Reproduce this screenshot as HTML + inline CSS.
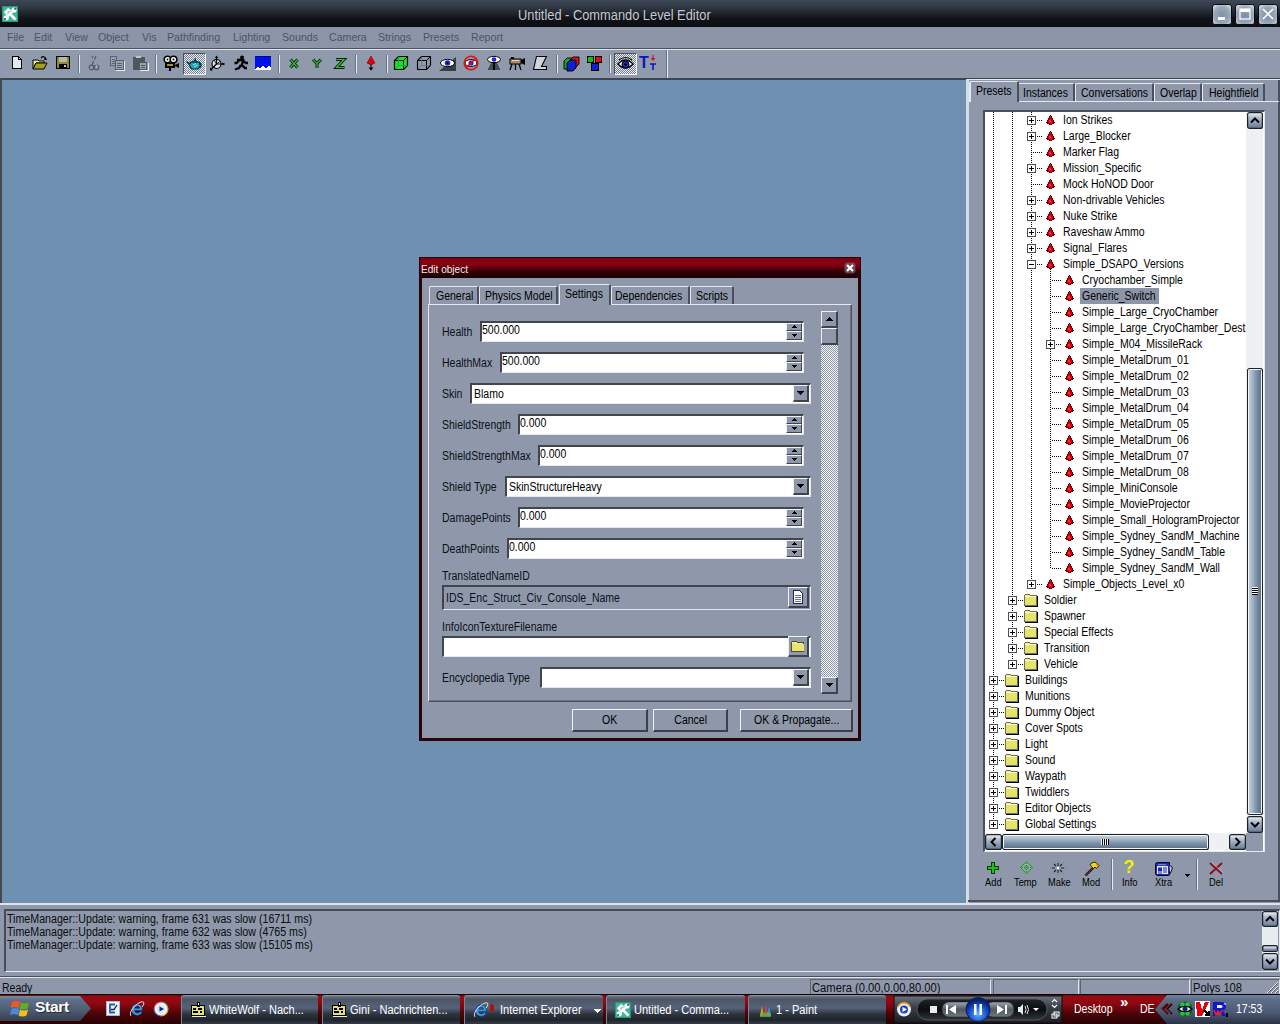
<!DOCTYPE html><html><head><meta charset="utf-8"><style>
*{box-sizing:border-box}
html,body{margin:0;padding:0;width:1280px;height:1024px;overflow:hidden;background:#8e98aa;font-family:"Liberation Sans",sans-serif;font-size:11px;color:#000}
.a{position:absolute}
.t{position:absolute;white-space:nowrap;line-height:13px;font-size:12px;transform-origin:0 0}
svg.a{overflow:visible}
</style></head><body><div class="a" style="left:0px;top:0px;width:1280px;height:27px;background:linear-gradient(#3e4856 0px,#343c48 6px,#20262e 13px,#0f1217 19px,#0c0e12 27px)"></div>
<svg class="a" style="left:2px;top:6px" width="16" height="16" viewBox="0 0 16 16">
<rect x="0" y="0" width="16" height="16" fill="#3cb898"/>
<rect x="0.5" y="0.5" width="15" height="15" fill="none" stroke="#2a9878" stroke-width="1"/>
<path d="M4.5 11.5 L11.5 4.5" stroke="#fff" stroke-width="2.4"/>
<circle cx="12" cy="4" r="2.6" fill="#fff"/><circle cx="13.2" cy="2.8" r="1.1" fill="#1a7058"/>
<circle cx="4.2" cy="11.8" r="2.6" fill="#fff"/><circle cx="3" cy="13" r="1.1" fill="#1a7058"/>
<path d="M7 7 L13.5 13.5" stroke="#fff" stroke-width="2.6"/>
<path d="M1.8 6.2 L6.2 1.8 L9.2 4.8 L4.8 9.2z" fill="#fff"/>
<path d="M5.5 7 L7.5 5" stroke="#1a7058" stroke-width="0.8"/>
</svg>
<div class="t" style="left:518px;top:7px;transform:scaleX(0.917);font-size:14px;line-height:16px;color:#c4c8ce">Untitled - Commando Level Editor</div>
<svg class="a" style="left:1212px;top:4px" width="20" height="21" viewBox="0 0 20 21">
<defs><radialGradient id="wgmin" cx="50%" cy="55%" r="70%">
<stop offset="0" stop-color="#7d8ea6"/><stop offset="0.6" stop-color="#9aa8ba"/><stop offset="1" stop-color="#e4e9ef"/></radialGradient></defs>
<rect x="0.5" y="0.5" width="19" height="20" rx="2.5" fill="url(#wgmin)" stroke="#0a0c10"/>
<rect x="6" y="13" width="7" height="3" fill="#fff"/></svg>
<svg class="a" style="left:1235px;top:4px" width="20" height="21" viewBox="0 0 20 21">
<defs><radialGradient id="wgmax" cx="50%" cy="55%" r="70%">
<stop offset="0" stop-color="#7d8ea6"/><stop offset="0.6" stop-color="#9aa8ba"/><stop offset="1" stop-color="#e4e9ef"/></radialGradient></defs>
<rect x="0.5" y="0.5" width="19" height="20" rx="2.5" fill="url(#wgmax)" stroke="#0a0c10"/>
<rect x="5" y="5" width="10" height="10" fill="none" stroke="#fff" stroke-width="1.2"/><rect x="5" y="5" width="10" height="3" fill="#fff"/></svg>
<svg class="a" style="left:1258px;top:4px" width="20" height="21" viewBox="0 0 20 21">
<defs><radialGradient id="wgclose" cx="50%" cy="55%" r="70%">
<stop offset="0" stop-color="#7d8ea6"/><stop offset="0.6" stop-color="#9aa8ba"/><stop offset="1" stop-color="#e4e9ef"/></radialGradient></defs>
<rect x="0.5" y="0.5" width="19" height="20" rx="2.5" fill="url(#wgclose)" stroke="#0a0c10"/>
<path d="M5 5 L15 15 M15 5 L5 15" stroke="#fff" stroke-width="1.6"/></svg>
<div class="a" style="left:0px;top:27px;width:1280px;height:21px;background:#8b95a7"></div>
<div class="t" style="left:7px;top:31px;transform:scaleX(0.965);color:#4d5464;font-size:11px">File</div>
<div class="t" style="left:34px;top:31px;transform:scaleX(0.965);color:#4d5464;font-size:11px">Edit</div>
<div class="t" style="left:65px;top:31px;transform:scaleX(0.965);color:#4d5464;font-size:11px">View</div>
<div class="t" style="left:98px;top:31px;transform:scaleX(0.965);color:#4d5464;font-size:11px">Object</div>
<div class="t" style="left:142px;top:31px;transform:scaleX(0.965);color:#4d5464;font-size:11px">Vis</div>
<div class="t" style="left:167px;top:31px;transform:scaleX(0.965);color:#4d5464;font-size:11px">Pathfinding</div>
<div class="t" style="left:233px;top:31px;transform:scaleX(0.965);color:#4d5464;font-size:11px">Lighting</div>
<div class="t" style="left:282px;top:31px;transform:scaleX(0.965);color:#4d5464;font-size:11px">Sounds</div>
<div class="t" style="left:329px;top:31px;transform:scaleX(0.965);color:#4d5464;font-size:11px">Camera</div>
<div class="t" style="left:378px;top:31px;transform:scaleX(0.965);color:#4d5464;font-size:11px">Strings</div>
<div class="t" style="left:423px;top:31px;transform:scaleX(0.965);color:#4d5464;font-size:11px">Presets</div>
<div class="t" style="left:471px;top:31px;transform:scaleX(0.965);color:#4d5464;font-size:11px">Report</div>
<div class="a" style="left:0px;top:48px;width:1280px;height:1px;background:#4a505e"></div>
<div class="a" style="left:0px;top:49px;width:1280px;height:1px;background:#e2e6ee"></div>
<div class="a" style="left:0px;top:50px;width:1280px;height:28px;background:#8f9aac"></div>
<svg class="a" style="left:9px;top:55px" width="16" height="16" viewBox="0 0 16 16" shape-rendering="crispEdges"><path d="M3.5 1.5h6l3 3v9h-9z" fill="#e4e6f0" stroke="#000"/><path d="M9.5 1.5v3h3" fill="none" stroke="#000"/></svg>
<svg class="a" style="left:32px;top:55px" width="16" height="16" viewBox="0 0 16 16"><path d="M1 5h5l1 1h5v2H4L1 14z" fill="#f0ec90" stroke="#000"/><path d="M1 14l3-6h11l-3 6z" fill="#a0a020" stroke="#000"/><path d="M9 3 q3-3 5 1" fill="none" stroke="#000" stroke-width="1.2"/><path d="M13 2l2 3l-3 0z" fill="#000"/></svg>
<svg class="a" style="left:55px;top:55px" width="16" height="16" viewBox="0 0 16 16" shape-rendering="crispEdges"><rect x="1.5" y="1.5" width="13" height="12" fill="#8c8c28" stroke="#000"/><rect x="4" y="2" width="8" height="5" fill="#b8b8b0"/><rect x="4" y="9" width="8" height="4" fill="#000"/><rect x="9" y="10" width="2" height="2" fill="#c8c8a0"/></svg>
<div class="a" style="left:78px;top:55px;width:1px;height:18px;background:#6a7282"></div>
<div class="a" style="left:79px;top:55px;width:1px;height:18px;background:#e8ecf2"></div>
<svg class="a" style="left:86px;top:55px" width="16" height="16" viewBox="0 0 16 16"><path d="M6 1 L10 10 M10 1 L6 10" stroke="#555c68" stroke-width="1.2"/><circle cx="5.5" cy="12.5" r="2.3" fill="none" stroke="#555c68" stroke-width="1.2"/><circle cx="10.5" cy="12.5" r="2.3" fill="none" stroke="#555c68" stroke-width="1.2"/><path d="M6 2 L10 11" stroke="#e8ecf2" stroke-width="0.6" transform="translate(1 1)"/></svg>
<svg class="a" style="left:109px;top:55px" width="16" height="16" viewBox="0 0 16 16" shape-rendering="crispEdges"><path d="M1.5 1.5h6v9h-6z" fill="#9aa2b0" stroke="#5a606c"/><path d="M6.5 5.5h8v9h-8z" fill="#9aa2b0" stroke="#5a606c"/><path d="M8 8h5M8 10h5M8 12h5M3 4h3M3 6h3M3 8h3" stroke="#5a606c"/><path d="M7 15h8V6" fill="none" stroke="#e6eaf0"/></svg>
<svg class="a" style="left:132px;top:55px" width="16" height="16" viewBox="0 0 16 16" shape-rendering="crispEdges"><rect x="1" y="2" width="11" height="12" fill="#50565e" stroke="#50565e"/><rect x="4" y="1" width="5" height="2" fill="#c0c6d0"/><rect x="7.5" y="7.5" width="7" height="7" fill="#9aa2b0" stroke="#50565e"/><path d="M9 10h4M9 12h4" stroke="#50565e"/><path d="M8 15h8V8" fill="none" stroke="#e6eaf0"/></svg>
<div class="a" style="left:155px;top:55px;width:1px;height:18px;background:#6a7282"></div>
<div class="a" style="left:156px;top:55px;width:1px;height:18px;background:#e8ecf2"></div>
<svg class="a" style="left:163px;top:55px" width="16" height="16" viewBox="0 0 16 16"><circle cx="4.5" cy="4.5" r="3.3" fill="#fff" stroke="#000" stroke-width="1.6"/><circle cx="10.5" cy="4.5" r="3.3" fill="#fff" stroke="#000" stroke-width="1.6"/><circle cx="4.5" cy="4.5" r="1" fill="#000"/><circle cx="10.5" cy="4.5" r="1" fill="#000"/><rect x="2" y="8" width="10" height="5" fill="#000"/><path d="M12 10l4-2v5l-4-2z" fill="#000"/><rect x="6" y="13" width="2" height="3" fill="#000"/><rect x="4" y="9" width="6" height="2" fill="#a09030"/></svg>
<div class="a" style="left:183px;top:53px;width:23px;height:22px;border-top:1px solid #4a505c;border-left:1px solid #4a505c;border-bottom:1px solid #eef1f5;border-right:1px solid #eef1f5;background-color:#b0b6c0;background-image:repeating-conic-gradient(#e8ebf0 0 25%,#7a8292 0 50%);background-size:2px 2px"></div>
<svg class="a" style="left:186px;top:55px" width="17" height="16" viewBox="0 0 17 16"><path d="M5 7 H13 Q15 9 13.5 12.5 L12 14 H6 L4.5 12.5 Q3 9 5 7z" fill="#20a8b8" stroke="#002830" stroke-width="1.1"/><path d="M6.5 7 Q9 3.5 11.5 7z" fill="#20a8b8" stroke="#002830" stroke-width="1"/><rect x="8.5" y="3.5" width="1.5" height="1.5" fill="#002830"/><path d="M5 9 L0.8 6.8 L2.5 9 L4.5 12" fill="#20a8b8" stroke="#002830" stroke-width="1"/><path d="M13.5 8.5 Q16.5 9 14 12.5" fill="none" stroke="#002830" stroke-width="1.3"/><path d="M7 10 L10 8.5 M8 12 L11.5 10" stroke="#90f0f0" stroke-width="0.9"/></svg>
<svg class="a" style="left:209px;top:55px" width="16" height="16" viewBox="0 0 16 16"><circle cx="7.5" cy="9" r="4.5" fill="#dde2ea" stroke="#000" stroke-width="1.1"/><path d="M7.5 1v8 M7.5 9l8 0 M7.5 9l-6 6" stroke="#000" stroke-width="1.2" fill="none"/><path d="M6 3l1.5-2.5l1.5 2.5z M13.5 7.5l2.5 1.5l-2.5 1.5z M1 12.5v3h3z" fill="#000"/><path d="M7.5 9l-2.5-4 M7.5 9 l4-3" stroke="#000" stroke-width="0.8"/></svg>
<svg class="a" style="left:232px;top:55px" width="16" height="16" viewBox="0 0 16 16"><circle cx="10" cy="2.5" r="2" fill="#000"/><path d="M5 5h6l-1 5 l3 3h2 M10.5 5l3.5 3h2 M7.5 5l-3 3h-2 M9 10l-2 3l-4 1.5" stroke="#000" stroke-width="2.3" fill="none"/></svg>
<svg class="a" style="left:255px;top:56px" width="16" height="14" viewBox="0 0 16 14" shape-rendering="crispEdges"><rect x="0" y="0" width="16" height="14" fill="#0010e8"/><path d="M0 14 L2 11 L5 12 L8 10 L11 12 L14 10 L16 11 L16 14z" fill="#fff"/><rect x="0" y="0" width="16" height="1" fill="#0000a0"/></svg>
<div class="a" style="left:278px;top:55px;width:1px;height:18px;background:#6a7282"></div>
<div class="a" style="left:279px;top:55px;width:1px;height:18px;background:#e8ecf2"></div>
<svg class="a" style="left:289px;top:58px" width="11" height="11" viewBox="0 0 11 11"><path d="M1.5 1.5 L8.5 9.5 M8.5 1.5 L1.5 9.5" stroke="#0a1a0a" stroke-width="3" fill="none" stroke-linejoin="miter"/><path d="M1.5 1.5 L8.5 9.5 M8.5 1.5 L1.5 9.5" stroke="#30c030" stroke-width="1.2" fill="none"/></svg>
<svg class="a" style="left:312px;top:58px" width="11" height="11" viewBox="0 0 11 11"><path d="M1 1.5 L5 5.5 L9 1.5 M5 5.5 V10" stroke="#0a1a0a" stroke-width="3" fill="none" stroke-linejoin="miter"/><path d="M1 1.5 L5 5.5 L9 1.5 M5 5.5 V10" stroke="#30c030" stroke-width="1.2" fill="none"/></svg>
<svg class="a" style="left:335px;top:58px" width="11" height="11" viewBox="0 0 11 11"><path d="M1 1.5 H9 L1.5 9.5 H9.5" stroke="#0a1a0a" stroke-width="3" fill="none" stroke-linejoin="miter"/><path d="M1 1.5 H9 L1.5 9.5 H9.5" stroke="#30c030" stroke-width="1.2" fill="none"/></svg>
<div class="a" style="left:355px;top:55px;width:1px;height:18px;background:#6a7282"></div>
<div class="a" style="left:356px;top:55px;width:1px;height:18px;background:#e8ecf2"></div>
<svg class="a" style="left:363px;top:55px" width="16" height="16" viewBox="0 0 16 16"><path d="M8 1 L12 8 Q8 11 4 8z" fill="#e00010" stroke="#900" stroke-width="0.6"/><path d="M8 9v6" stroke="#000" stroke-width="1"/><path d="M5.5 12.5h5l-2.5 3z" fill="#000"/></svg>
<div class="a" style="left:386px;top:55px;width:1px;height:18px;background:#6a7282"></div>
<div class="a" style="left:387px;top:55px;width:1px;height:18px;background:#e8ecf2"></div>
<svg class="a" style="left:393px;top:55px" width="16" height="16" viewBox="0 0 16 16"><path d="M1.5 5.5 L5.5 1.5 H14.5 V10.5 L10.5 14.5 H1.5z" fill="#20e020" stroke="#000" stroke-width="1.2"/><path d="M1.5 5.5H10.5V14.5 M10.5 5.5L14.5 1.5" stroke="#000" stroke-width="1" fill="none"/><path d="M5.5 1.5V10.5H14.5 M5.5 10.5L1.5 14.5" stroke="#0a6" stroke-width="0.8" fill="none"/></svg>
<svg class="a" style="left:416px;top:55px" width="16" height="16" viewBox="0 0 16 16"><path d="M1.5 5.5 L5.5 1.5 H14.5 V10.5 L10.5 14.5 H1.5z" fill="none" stroke="#000" stroke-width="1.1"/><path d="M1.5 5.5H10.5V14.5 M10.5 5.5L14.5 1.5" stroke="#000" stroke-width="1" fill="none"/><path d="M5.5 1.5V10.5H14.5 M5.5 10.5L1.5 14.5" stroke="#667" stroke-width="0.6" fill="none"/></svg>
<svg class="a" style="left:439px;top:55px" width="17" height="16" viewBox="0 0 17 16"><path d="M0 16 L17 2 V16z" fill="#3a3e44"/><ellipse cx="8.5" cy="8" rx="7" ry="3.6" fill="#fff" stroke="#000" stroke-width="1"/><circle cx="8.5" cy="8" r="2.8" fill="#1e2ad0"/><circle cx="8.5" cy="8" r="1.1" fill="#000"/></svg>
<svg class="a" style="left:463px;top:55px" width="16" height="16" viewBox="0 0 16 16"><ellipse cx="8" cy="8" rx="6" ry="3.4" fill="#fff" stroke="#000"/><circle cx="8" cy="8" r="2.6" fill="#1e2ad0"/><circle cx="8" cy="8" r="6.8" fill="none" stroke="#e01010" stroke-width="1.6"/><path d="M3 13L13 3" stroke="#e01010" stroke-width="1.6"/></svg>
<svg class="a" style="left:486px;top:55px" width="16" height="16" viewBox="0 0 16 16"><ellipse cx="8" cy="4.5" rx="6.5" ry="3.2" fill="#fff" stroke="#000"/><circle cx="8" cy="4.5" r="2.3" fill="#1e2ad0"/><path d="M5 8h6M4 10h8M3 12h10M2 14h12" stroke="#000" stroke-width="1.2"/><path d="M8 7v8" stroke="#000" stroke-width="2"/></svg>
<svg class="a" style="left:509px;top:55px" width="16" height="16" viewBox="0 0 16 16"><rect x="1" y="4" width="11" height="5" fill="#b08860" stroke="#000"/><path d="M12 5l4-2v7l-4-2z" fill="#000"/><path d="M3 9 L1 15 M10 9 L12 15 M6.5 9v6" stroke="#000" stroke-width="1.3"/><rect x="2" y="2" width="3" height="2" fill="#000"/><rect x="3" y="5" width="7" height="1" fill="#e0d8c0"/></svg>
<svg class="a" style="left:532px;top:55px" width="16" height="16" viewBox="0 0 16 16"><path d="M4.5 1.5 H14.5 L9.5 11.5 H14.5 V14.5 H1.5z" fill="#d0d4dc" stroke="#000" stroke-width="1.1"/></svg>
<div class="a" style="left:556px;top:55px;width:1px;height:18px;background:#6a7282"></div>
<div class="a" style="left:557px;top:55px;width:1px;height:18px;background:#e8ecf2"></div>
<svg class="a" style="left:563px;top:55px" width="17" height="16" viewBox="0 0 17 16"><path d="M1 6 L4 3 H10 V11 L7 14 H1z" fill="#10b010" stroke="#000" stroke-width="0.9"/><path d="M7 5 L10 2 H16 V9 L13 12 H7z" fill="#e01010" stroke="#000" stroke-width="0.9"/><path d="M4 8 L7 5 H13 V13 L10 16 H4z" fill="#1020d0" stroke="#000" stroke-width="0.9"/></svg>
<svg class="a" style="left:586px;top:55px" width="16" height="16" viewBox="0 0 16 16" shape-rendering="crispEdges"><rect x="1.5" y="1.5" width="6" height="6" fill="#10c010" stroke="#000"/><rect x="9.5" y="1.5" width="6" height="6" fill="#e01010" stroke="#000"/><rect x="5.5" y="8.5" width="7" height="7" fill="#1020d0" stroke="#000"/></svg>
<div class="a" style="left:609px;top:55px;width:1px;height:18px;background:#6a7282"></div>
<div class="a" style="left:610px;top:55px;width:1px;height:18px;background:#e8ecf2"></div>
<div class="a" style="left:614px;top:53px;width:23px;height:22px;border-top:1px solid #4a505c;border-left:1px solid #4a505c;border-bottom:1px solid #eef1f5;border-right:1px solid #eef1f5;background-color:#b0b6c0;background-image:repeating-conic-gradient(#e8ebf0 0 25%,#7a8292 0 50%);background-size:2px 2px"></div>
<svg class="a" style="left:617px;top:56px" width="17" height="16" viewBox="0 0 17 16"><path d="M1 8 Q8.5 0 16 8 Q8.5 16 1 8z" fill="#fff" stroke="#000" stroke-width="1.5"/><circle cx="8.5" cy="8.5" r="3.5" fill="#1e2ad0" stroke="#000"/><circle cx="8.5" cy="8.5" r="1.3" fill="#000"/><path d="M2 4 Q8.5 -1 15 4" fill="none" stroke="#000" stroke-width="1.2"/></svg>
<div class="a" style="left:639px;top:54px;font-weight:bold;font-size:16px;line-height:18px;color:#0c14b8">T</div>
<svg class="a" style="left:649px;top:55px" width="8" height="16" viewBox="0 0 8 16"><path d="M4 0v4" stroke="#e01010" stroke-width="1.2"/><path d="M1.5 3h5l-2.5 3z" fill="#e01010"/><path d="M1 9h6M4 9v6" stroke="#0c14b8" stroke-width="1.6"/></svg>
<div class="a" style="left:666px;top:50px;width:1px;height:28px;background:#6a7282"></div>
<div class="a" style="left:667px;top:50px;width:1px;height:28px;background:#e8ecf2"></div>
<div class="a" style="left:0px;top:78px;width:1280px;height:2px;background:#3e4550"></div>
<div class="a" style="left:0px;top:80px;width:966px;height:823px;background:#6f91b1"></div>
<div class="a" style="left:0px;top:78px;width:2px;height:826px;background:#434a55"></div>
<div class="a" style="left:966px;top:80px;width:314px;height:823px;background:#8e98aa"></div>
<div class="a" style="left:966px;top:79px;width:314px;height:1px;background:#e4e8ef"></div>
<div class="a" style="left:966px;top:79px;width:3px;height:824px;background:#d4dcea"></div>
<div class="a" style="left:1278px;top:80px;width:2px;height:822px;background:#4a505c"></div>
<div class="a" style="left:968px;top:900px;width:312px;height:2px;background:#4a505c"></div>
<div class="a" style="left:969px;top:101px;width:310px;height:1px;background:#e4e8ef"></div>
<div class="a" style="left:1018px;top:83px;width:57px;height:18px;border-top:1px solid #e4e8ef;border-left:1px solid #e4e8ef;border-right:2px solid #4a505c;border-top-left-radius:2px;border-top-right-radius:2px;background:#8e98aa"></div>
<div class="t" style="left:1023px;top:87px;transform:scaleX(0.875);">Instances</div>
<div class="a" style="left:1075px;top:83px;width:79px;height:18px;border-top:1px solid #e4e8ef;border-left:1px solid #e4e8ef;border-right:2px solid #4a505c;border-top-left-radius:2px;border-top-right-radius:2px;background:#8e98aa"></div>
<div class="t" style="left:1081px;top:87px;transform:scaleX(0.875);">Conversations</div>
<div class="a" style="left:1154px;top:83px;width:48px;height:18px;border-top:1px solid #e4e8ef;border-left:1px solid #e4e8ef;border-right:2px solid #4a505c;border-top-left-radius:2px;border-top-right-radius:2px;background:#8e98aa"></div>
<div class="t" style="left:1160px;top:87px;transform:scaleX(0.875);">Overlap</div>
<div class="a" style="left:1202px;top:83px;width:63px;height:18px;border-top:1px solid #e4e8ef;border-left:1px solid #e4e8ef;border-right:2px solid #4a505c;border-top-left-radius:2px;border-top-right-radius:2px;background:#8e98aa"></div>
<div class="t" style="left:1209px;top:87px;transform:scaleX(0.875);">Heightfield</div>
<div class="a" style="left:969px;top:81px;width:50px;height:21px;border-top:1px solid #e4e8ef;border-left:2px solid #e4e8ef;border-right:2px solid #4a505c;border-top-left-radius:2px;border-top-right-radius:2px;background:#8e98aa"></div>
<div class="t" style="left:976px;top:85px;transform:scaleX(0.875);">Presets</div>
<div class="a" style="left:983px;top:110px;width:282px;height:742px;border-top:2px solid #4a505c;border-left:2px solid #4a505c;border-bottom:1px solid #e4e8ef;border-right:1px solid #e4e8ef;background:#fff"></div>
<div class="a" style="left:985px;top:112px;width:261px;height:721px;overflow:hidden">
<div class="a" style="left:8px;top:0px;width:1px;height:712px;background-image:linear-gradient(#000 50%,transparent 50%);background-size:1px 2px"></div>
<div class="a" style="left:27px;top:0px;width:1px;height:552px;background-image:linear-gradient(#000 50%,transparent 50%);background-size:1px 2px"></div>
<div class="a" style="left:46px;top:0px;width:1px;height:472px;background-image:linear-gradient(#000 50%,transparent 50%);background-size:1px 2px"></div>
<div class="a" style="left:65px;top:157px;width:1px;height:299px;background-image:linear-gradient(#000 50%,transparent 50%);background-size:1px 2px"></div>
<div class="a" style="left:48px;top:8px;width:10px;height:1px;background-image:linear-gradient(90deg,#000 50%,transparent 50%);background-size:2px 1px"></div>
<div class="a" style="left:42px;top:4px;width:9px;height:9px;border:1px solid #4a4e56;background:#fff"></div>
<div class="a" style="left:44px;top:8px;width:5px;height:1px;background:#000"></div>
<div class="a" style="left:46px;top:6px;width:1px;height:5px;background:#000"></div>
<svg class="a" style="left:61px;top:3px" width="9" height="10" viewBox="0 0 9 10" shape-rendering="crispEdges"><rect x="4" y="0" width="1" height="1" fill="#5a0000"/><rect x="3" y="1" width="3" height="1" fill="#5a0000"/><rect x="3" y="2" width="3" height="1" fill="#5a0000"/><rect x="2" y="3" width="5" height="1" fill="#5a0000"/><rect x="2" y="4" width="5" height="1" fill="#5a0000"/><rect x="1" y="5" width="7" height="1" fill="#5a0000"/><rect x="1" y="6" width="7" height="1" fill="#5a0000"/><rect x="0" y="7" width="9" height="1" fill="#5a0000"/><rect x="1" y="8" width="7" height="1" fill="#5a0000"/><rect x="3" y="9" width="3" height="1" fill="#5a0000"/><rect x="4" y="1" width="1" height="1" fill="#d80010"/><rect x="4" y="2" width="1" height="1" fill="#d80010"/><rect x="3" y="3" width="3" height="1" fill="#d80010"/><rect x="3" y="4" width="3" height="1" fill="#d80010"/><rect x="2" y="5" width="5" height="1" fill="#d80010"/><rect x="2" y="6" width="5" height="1" fill="#d80010"/><rect x="2" y="7" width="5" height="1" fill="#d80010"/><rect x="3" y="8" width="3" height="1" fill="#d80010"/><rect x="4" y="9" width="1" height="1" fill="#d80010"/><rect x="3" y="5" width="2" height="2" fill="#ff2030"/><rect x="3" y="7" width="3" height="1" fill="#f01020"/></svg>
<div class="t" style="left:78px;top:2px;transform:scaleX(0.875);color:#000">Ion Strikes</div>
<div class="a" style="left:48px;top:24px;width:10px;height:1px;background-image:linear-gradient(90deg,#000 50%,transparent 50%);background-size:2px 1px"></div>
<div class="a" style="left:42px;top:20px;width:9px;height:9px;border:1px solid #4a4e56;background:#fff"></div>
<div class="a" style="left:44px;top:24px;width:5px;height:1px;background:#000"></div>
<div class="a" style="left:46px;top:22px;width:1px;height:5px;background:#000"></div>
<svg class="a" style="left:61px;top:19px" width="9" height="10" viewBox="0 0 9 10" shape-rendering="crispEdges"><rect x="4" y="0" width="1" height="1" fill="#5a0000"/><rect x="3" y="1" width="3" height="1" fill="#5a0000"/><rect x="3" y="2" width="3" height="1" fill="#5a0000"/><rect x="2" y="3" width="5" height="1" fill="#5a0000"/><rect x="2" y="4" width="5" height="1" fill="#5a0000"/><rect x="1" y="5" width="7" height="1" fill="#5a0000"/><rect x="1" y="6" width="7" height="1" fill="#5a0000"/><rect x="0" y="7" width="9" height="1" fill="#5a0000"/><rect x="1" y="8" width="7" height="1" fill="#5a0000"/><rect x="3" y="9" width="3" height="1" fill="#5a0000"/><rect x="4" y="1" width="1" height="1" fill="#d80010"/><rect x="4" y="2" width="1" height="1" fill="#d80010"/><rect x="3" y="3" width="3" height="1" fill="#d80010"/><rect x="3" y="4" width="3" height="1" fill="#d80010"/><rect x="2" y="5" width="5" height="1" fill="#d80010"/><rect x="2" y="6" width="5" height="1" fill="#d80010"/><rect x="2" y="7" width="5" height="1" fill="#d80010"/><rect x="3" y="8" width="3" height="1" fill="#d80010"/><rect x="4" y="9" width="1" height="1" fill="#d80010"/><rect x="3" y="5" width="2" height="2" fill="#ff2030"/><rect x="3" y="7" width="3" height="1" fill="#f01020"/></svg>
<div class="t" style="left:78px;top:18px;transform:scaleX(0.875);color:#000">Large_Blocker</div>
<div class="a" style="left:48px;top:40px;width:10px;height:1px;background-image:linear-gradient(90deg,#000 50%,transparent 50%);background-size:2px 1px"></div>
<svg class="a" style="left:61px;top:35px" width="9" height="10" viewBox="0 0 9 10" shape-rendering="crispEdges"><rect x="4" y="0" width="1" height="1" fill="#5a0000"/><rect x="3" y="1" width="3" height="1" fill="#5a0000"/><rect x="3" y="2" width="3" height="1" fill="#5a0000"/><rect x="2" y="3" width="5" height="1" fill="#5a0000"/><rect x="2" y="4" width="5" height="1" fill="#5a0000"/><rect x="1" y="5" width="7" height="1" fill="#5a0000"/><rect x="1" y="6" width="7" height="1" fill="#5a0000"/><rect x="0" y="7" width="9" height="1" fill="#5a0000"/><rect x="1" y="8" width="7" height="1" fill="#5a0000"/><rect x="3" y="9" width="3" height="1" fill="#5a0000"/><rect x="4" y="1" width="1" height="1" fill="#d80010"/><rect x="4" y="2" width="1" height="1" fill="#d80010"/><rect x="3" y="3" width="3" height="1" fill="#d80010"/><rect x="3" y="4" width="3" height="1" fill="#d80010"/><rect x="2" y="5" width="5" height="1" fill="#d80010"/><rect x="2" y="6" width="5" height="1" fill="#d80010"/><rect x="2" y="7" width="5" height="1" fill="#d80010"/><rect x="3" y="8" width="3" height="1" fill="#d80010"/><rect x="4" y="9" width="1" height="1" fill="#d80010"/><rect x="3" y="5" width="2" height="2" fill="#ff2030"/><rect x="3" y="7" width="3" height="1" fill="#f01020"/></svg>
<div class="t" style="left:78px;top:34px;transform:scaleX(0.875);color:#000">Marker Flag</div>
<div class="a" style="left:48px;top:56px;width:10px;height:1px;background-image:linear-gradient(90deg,#000 50%,transparent 50%);background-size:2px 1px"></div>
<div class="a" style="left:42px;top:52px;width:9px;height:9px;border:1px solid #4a4e56;background:#fff"></div>
<div class="a" style="left:44px;top:56px;width:5px;height:1px;background:#000"></div>
<div class="a" style="left:46px;top:54px;width:1px;height:5px;background:#000"></div>
<svg class="a" style="left:61px;top:51px" width="9" height="10" viewBox="0 0 9 10" shape-rendering="crispEdges"><rect x="4" y="0" width="1" height="1" fill="#5a0000"/><rect x="3" y="1" width="3" height="1" fill="#5a0000"/><rect x="3" y="2" width="3" height="1" fill="#5a0000"/><rect x="2" y="3" width="5" height="1" fill="#5a0000"/><rect x="2" y="4" width="5" height="1" fill="#5a0000"/><rect x="1" y="5" width="7" height="1" fill="#5a0000"/><rect x="1" y="6" width="7" height="1" fill="#5a0000"/><rect x="0" y="7" width="9" height="1" fill="#5a0000"/><rect x="1" y="8" width="7" height="1" fill="#5a0000"/><rect x="3" y="9" width="3" height="1" fill="#5a0000"/><rect x="4" y="1" width="1" height="1" fill="#d80010"/><rect x="4" y="2" width="1" height="1" fill="#d80010"/><rect x="3" y="3" width="3" height="1" fill="#d80010"/><rect x="3" y="4" width="3" height="1" fill="#d80010"/><rect x="2" y="5" width="5" height="1" fill="#d80010"/><rect x="2" y="6" width="5" height="1" fill="#d80010"/><rect x="2" y="7" width="5" height="1" fill="#d80010"/><rect x="3" y="8" width="3" height="1" fill="#d80010"/><rect x="4" y="9" width="1" height="1" fill="#d80010"/><rect x="3" y="5" width="2" height="2" fill="#ff2030"/><rect x="3" y="7" width="3" height="1" fill="#f01020"/></svg>
<div class="t" style="left:78px;top:50px;transform:scaleX(0.875);color:#000">Mission_Specific</div>
<div class="a" style="left:48px;top:72px;width:10px;height:1px;background-image:linear-gradient(90deg,#000 50%,transparent 50%);background-size:2px 1px"></div>
<svg class="a" style="left:61px;top:67px" width="9" height="10" viewBox="0 0 9 10" shape-rendering="crispEdges"><rect x="4" y="0" width="1" height="1" fill="#5a0000"/><rect x="3" y="1" width="3" height="1" fill="#5a0000"/><rect x="3" y="2" width="3" height="1" fill="#5a0000"/><rect x="2" y="3" width="5" height="1" fill="#5a0000"/><rect x="2" y="4" width="5" height="1" fill="#5a0000"/><rect x="1" y="5" width="7" height="1" fill="#5a0000"/><rect x="1" y="6" width="7" height="1" fill="#5a0000"/><rect x="0" y="7" width="9" height="1" fill="#5a0000"/><rect x="1" y="8" width="7" height="1" fill="#5a0000"/><rect x="3" y="9" width="3" height="1" fill="#5a0000"/><rect x="4" y="1" width="1" height="1" fill="#d80010"/><rect x="4" y="2" width="1" height="1" fill="#d80010"/><rect x="3" y="3" width="3" height="1" fill="#d80010"/><rect x="3" y="4" width="3" height="1" fill="#d80010"/><rect x="2" y="5" width="5" height="1" fill="#d80010"/><rect x="2" y="6" width="5" height="1" fill="#d80010"/><rect x="2" y="7" width="5" height="1" fill="#d80010"/><rect x="3" y="8" width="3" height="1" fill="#d80010"/><rect x="4" y="9" width="1" height="1" fill="#d80010"/><rect x="3" y="5" width="2" height="2" fill="#ff2030"/><rect x="3" y="7" width="3" height="1" fill="#f01020"/></svg>
<div class="t" style="left:78px;top:66px;transform:scaleX(0.875);color:#000">Mock HoNOD Door</div>
<div class="a" style="left:48px;top:88px;width:10px;height:1px;background-image:linear-gradient(90deg,#000 50%,transparent 50%);background-size:2px 1px"></div>
<div class="a" style="left:42px;top:84px;width:9px;height:9px;border:1px solid #4a4e56;background:#fff"></div>
<div class="a" style="left:44px;top:88px;width:5px;height:1px;background:#000"></div>
<div class="a" style="left:46px;top:86px;width:1px;height:5px;background:#000"></div>
<svg class="a" style="left:61px;top:83px" width="9" height="10" viewBox="0 0 9 10" shape-rendering="crispEdges"><rect x="4" y="0" width="1" height="1" fill="#5a0000"/><rect x="3" y="1" width="3" height="1" fill="#5a0000"/><rect x="3" y="2" width="3" height="1" fill="#5a0000"/><rect x="2" y="3" width="5" height="1" fill="#5a0000"/><rect x="2" y="4" width="5" height="1" fill="#5a0000"/><rect x="1" y="5" width="7" height="1" fill="#5a0000"/><rect x="1" y="6" width="7" height="1" fill="#5a0000"/><rect x="0" y="7" width="9" height="1" fill="#5a0000"/><rect x="1" y="8" width="7" height="1" fill="#5a0000"/><rect x="3" y="9" width="3" height="1" fill="#5a0000"/><rect x="4" y="1" width="1" height="1" fill="#d80010"/><rect x="4" y="2" width="1" height="1" fill="#d80010"/><rect x="3" y="3" width="3" height="1" fill="#d80010"/><rect x="3" y="4" width="3" height="1" fill="#d80010"/><rect x="2" y="5" width="5" height="1" fill="#d80010"/><rect x="2" y="6" width="5" height="1" fill="#d80010"/><rect x="2" y="7" width="5" height="1" fill="#d80010"/><rect x="3" y="8" width="3" height="1" fill="#d80010"/><rect x="4" y="9" width="1" height="1" fill="#d80010"/><rect x="3" y="5" width="2" height="2" fill="#ff2030"/><rect x="3" y="7" width="3" height="1" fill="#f01020"/></svg>
<div class="t" style="left:78px;top:82px;transform:scaleX(0.875);color:#000">Non-drivable Vehicles</div>
<div class="a" style="left:48px;top:104px;width:10px;height:1px;background-image:linear-gradient(90deg,#000 50%,transparent 50%);background-size:2px 1px"></div>
<div class="a" style="left:42px;top:100px;width:9px;height:9px;border:1px solid #4a4e56;background:#fff"></div>
<div class="a" style="left:44px;top:104px;width:5px;height:1px;background:#000"></div>
<div class="a" style="left:46px;top:102px;width:1px;height:5px;background:#000"></div>
<svg class="a" style="left:61px;top:99px" width="9" height="10" viewBox="0 0 9 10" shape-rendering="crispEdges"><rect x="4" y="0" width="1" height="1" fill="#5a0000"/><rect x="3" y="1" width="3" height="1" fill="#5a0000"/><rect x="3" y="2" width="3" height="1" fill="#5a0000"/><rect x="2" y="3" width="5" height="1" fill="#5a0000"/><rect x="2" y="4" width="5" height="1" fill="#5a0000"/><rect x="1" y="5" width="7" height="1" fill="#5a0000"/><rect x="1" y="6" width="7" height="1" fill="#5a0000"/><rect x="0" y="7" width="9" height="1" fill="#5a0000"/><rect x="1" y="8" width="7" height="1" fill="#5a0000"/><rect x="3" y="9" width="3" height="1" fill="#5a0000"/><rect x="4" y="1" width="1" height="1" fill="#d80010"/><rect x="4" y="2" width="1" height="1" fill="#d80010"/><rect x="3" y="3" width="3" height="1" fill="#d80010"/><rect x="3" y="4" width="3" height="1" fill="#d80010"/><rect x="2" y="5" width="5" height="1" fill="#d80010"/><rect x="2" y="6" width="5" height="1" fill="#d80010"/><rect x="2" y="7" width="5" height="1" fill="#d80010"/><rect x="3" y="8" width="3" height="1" fill="#d80010"/><rect x="4" y="9" width="1" height="1" fill="#d80010"/><rect x="3" y="5" width="2" height="2" fill="#ff2030"/><rect x="3" y="7" width="3" height="1" fill="#f01020"/></svg>
<div class="t" style="left:78px;top:98px;transform:scaleX(0.875);color:#000">Nuke Strike</div>
<div class="a" style="left:48px;top:120px;width:10px;height:1px;background-image:linear-gradient(90deg,#000 50%,transparent 50%);background-size:2px 1px"></div>
<div class="a" style="left:42px;top:116px;width:9px;height:9px;border:1px solid #4a4e56;background:#fff"></div>
<div class="a" style="left:44px;top:120px;width:5px;height:1px;background:#000"></div>
<div class="a" style="left:46px;top:118px;width:1px;height:5px;background:#000"></div>
<svg class="a" style="left:61px;top:115px" width="9" height="10" viewBox="0 0 9 10" shape-rendering="crispEdges"><rect x="4" y="0" width="1" height="1" fill="#5a0000"/><rect x="3" y="1" width="3" height="1" fill="#5a0000"/><rect x="3" y="2" width="3" height="1" fill="#5a0000"/><rect x="2" y="3" width="5" height="1" fill="#5a0000"/><rect x="2" y="4" width="5" height="1" fill="#5a0000"/><rect x="1" y="5" width="7" height="1" fill="#5a0000"/><rect x="1" y="6" width="7" height="1" fill="#5a0000"/><rect x="0" y="7" width="9" height="1" fill="#5a0000"/><rect x="1" y="8" width="7" height="1" fill="#5a0000"/><rect x="3" y="9" width="3" height="1" fill="#5a0000"/><rect x="4" y="1" width="1" height="1" fill="#d80010"/><rect x="4" y="2" width="1" height="1" fill="#d80010"/><rect x="3" y="3" width="3" height="1" fill="#d80010"/><rect x="3" y="4" width="3" height="1" fill="#d80010"/><rect x="2" y="5" width="5" height="1" fill="#d80010"/><rect x="2" y="6" width="5" height="1" fill="#d80010"/><rect x="2" y="7" width="5" height="1" fill="#d80010"/><rect x="3" y="8" width="3" height="1" fill="#d80010"/><rect x="4" y="9" width="1" height="1" fill="#d80010"/><rect x="3" y="5" width="2" height="2" fill="#ff2030"/><rect x="3" y="7" width="3" height="1" fill="#f01020"/></svg>
<div class="t" style="left:78px;top:114px;transform:scaleX(0.875);color:#000">Raveshaw Ammo</div>
<div class="a" style="left:48px;top:136px;width:10px;height:1px;background-image:linear-gradient(90deg,#000 50%,transparent 50%);background-size:2px 1px"></div>
<div class="a" style="left:42px;top:132px;width:9px;height:9px;border:1px solid #4a4e56;background:#fff"></div>
<div class="a" style="left:44px;top:136px;width:5px;height:1px;background:#000"></div>
<div class="a" style="left:46px;top:134px;width:1px;height:5px;background:#000"></div>
<svg class="a" style="left:61px;top:131px" width="9" height="10" viewBox="0 0 9 10" shape-rendering="crispEdges"><rect x="4" y="0" width="1" height="1" fill="#5a0000"/><rect x="3" y="1" width="3" height="1" fill="#5a0000"/><rect x="3" y="2" width="3" height="1" fill="#5a0000"/><rect x="2" y="3" width="5" height="1" fill="#5a0000"/><rect x="2" y="4" width="5" height="1" fill="#5a0000"/><rect x="1" y="5" width="7" height="1" fill="#5a0000"/><rect x="1" y="6" width="7" height="1" fill="#5a0000"/><rect x="0" y="7" width="9" height="1" fill="#5a0000"/><rect x="1" y="8" width="7" height="1" fill="#5a0000"/><rect x="3" y="9" width="3" height="1" fill="#5a0000"/><rect x="4" y="1" width="1" height="1" fill="#d80010"/><rect x="4" y="2" width="1" height="1" fill="#d80010"/><rect x="3" y="3" width="3" height="1" fill="#d80010"/><rect x="3" y="4" width="3" height="1" fill="#d80010"/><rect x="2" y="5" width="5" height="1" fill="#d80010"/><rect x="2" y="6" width="5" height="1" fill="#d80010"/><rect x="2" y="7" width="5" height="1" fill="#d80010"/><rect x="3" y="8" width="3" height="1" fill="#d80010"/><rect x="4" y="9" width="1" height="1" fill="#d80010"/><rect x="3" y="5" width="2" height="2" fill="#ff2030"/><rect x="3" y="7" width="3" height="1" fill="#f01020"/></svg>
<div class="t" style="left:78px;top:130px;transform:scaleX(0.875);color:#000">Signal_Flares</div>
<div class="a" style="left:48px;top:152px;width:10px;height:1px;background-image:linear-gradient(90deg,#000 50%,transparent 50%);background-size:2px 1px"></div>
<div class="a" style="left:42px;top:148px;width:9px;height:9px;border:1px solid #4a4e56;background:#fff"></div>
<div class="a" style="left:44px;top:152px;width:5px;height:1px;background:#000"></div>
<svg class="a" style="left:61px;top:147px" width="9" height="10" viewBox="0 0 9 10" shape-rendering="crispEdges"><rect x="4" y="0" width="1" height="1" fill="#5a0000"/><rect x="3" y="1" width="3" height="1" fill="#5a0000"/><rect x="3" y="2" width="3" height="1" fill="#5a0000"/><rect x="2" y="3" width="5" height="1" fill="#5a0000"/><rect x="2" y="4" width="5" height="1" fill="#5a0000"/><rect x="1" y="5" width="7" height="1" fill="#5a0000"/><rect x="1" y="6" width="7" height="1" fill="#5a0000"/><rect x="0" y="7" width="9" height="1" fill="#5a0000"/><rect x="1" y="8" width="7" height="1" fill="#5a0000"/><rect x="3" y="9" width="3" height="1" fill="#5a0000"/><rect x="4" y="1" width="1" height="1" fill="#d80010"/><rect x="4" y="2" width="1" height="1" fill="#d80010"/><rect x="3" y="3" width="3" height="1" fill="#d80010"/><rect x="3" y="4" width="3" height="1" fill="#d80010"/><rect x="2" y="5" width="5" height="1" fill="#d80010"/><rect x="2" y="6" width="5" height="1" fill="#d80010"/><rect x="2" y="7" width="5" height="1" fill="#d80010"/><rect x="3" y="8" width="3" height="1" fill="#d80010"/><rect x="4" y="9" width="1" height="1" fill="#d80010"/><rect x="3" y="5" width="2" height="2" fill="#ff2030"/><rect x="3" y="7" width="3" height="1" fill="#f01020"/></svg>
<div class="t" style="left:78px;top:146px;transform:scaleX(0.875);color:#000">Simple_DSAPO_Versions</div>
<div class="a" style="left:67px;top:168px;width:10px;height:1px;background-image:linear-gradient(90deg,#000 50%,transparent 50%);background-size:2px 1px"></div>
<svg class="a" style="left:80px;top:163px" width="9" height="10" viewBox="0 0 9 10" shape-rendering="crispEdges"><rect x="4" y="0" width="1" height="1" fill="#5a0000"/><rect x="3" y="1" width="3" height="1" fill="#5a0000"/><rect x="3" y="2" width="3" height="1" fill="#5a0000"/><rect x="2" y="3" width="5" height="1" fill="#5a0000"/><rect x="2" y="4" width="5" height="1" fill="#5a0000"/><rect x="1" y="5" width="7" height="1" fill="#5a0000"/><rect x="1" y="6" width="7" height="1" fill="#5a0000"/><rect x="0" y="7" width="9" height="1" fill="#5a0000"/><rect x="1" y="8" width="7" height="1" fill="#5a0000"/><rect x="3" y="9" width="3" height="1" fill="#5a0000"/><rect x="4" y="1" width="1" height="1" fill="#d80010"/><rect x="4" y="2" width="1" height="1" fill="#d80010"/><rect x="3" y="3" width="3" height="1" fill="#d80010"/><rect x="3" y="4" width="3" height="1" fill="#d80010"/><rect x="2" y="5" width="5" height="1" fill="#d80010"/><rect x="2" y="6" width="5" height="1" fill="#d80010"/><rect x="2" y="7" width="5" height="1" fill="#d80010"/><rect x="3" y="8" width="3" height="1" fill="#d80010"/><rect x="4" y="9" width="1" height="1" fill="#d80010"/><rect x="3" y="5" width="2" height="2" fill="#ff2030"/><rect x="3" y="7" width="3" height="1" fill="#f01020"/></svg>
<div class="t" style="left:97px;top:162px;transform:scaleX(0.875);color:#000">Cryochamber_Simple</div>
<div class="a" style="left:67px;top:184px;width:10px;height:1px;background-image:linear-gradient(90deg,#000 50%,transparent 50%);background-size:2px 1px"></div>
<svg class="a" style="left:80px;top:179px" width="9" height="10" viewBox="0 0 9 10" shape-rendering="crispEdges"><rect x="4" y="0" width="1" height="1" fill="#5a0000"/><rect x="3" y="1" width="3" height="1" fill="#5a0000"/><rect x="3" y="2" width="3" height="1" fill="#5a0000"/><rect x="2" y="3" width="5" height="1" fill="#5a0000"/><rect x="2" y="4" width="5" height="1" fill="#5a0000"/><rect x="1" y="5" width="7" height="1" fill="#5a0000"/><rect x="1" y="6" width="7" height="1" fill="#5a0000"/><rect x="0" y="7" width="9" height="1" fill="#5a0000"/><rect x="1" y="8" width="7" height="1" fill="#5a0000"/><rect x="3" y="9" width="3" height="1" fill="#5a0000"/><rect x="4" y="1" width="1" height="1" fill="#d80010"/><rect x="4" y="2" width="1" height="1" fill="#d80010"/><rect x="3" y="3" width="3" height="1" fill="#d80010"/><rect x="3" y="4" width="3" height="1" fill="#d80010"/><rect x="2" y="5" width="5" height="1" fill="#d80010"/><rect x="2" y="6" width="5" height="1" fill="#d80010"/><rect x="2" y="7" width="5" height="1" fill="#d80010"/><rect x="3" y="8" width="3" height="1" fill="#d80010"/><rect x="4" y="9" width="1" height="1" fill="#d80010"/><rect x="3" y="5" width="2" height="2" fill="#ff2030"/><rect x="3" y="7" width="3" height="1" fill="#f01020"/></svg>
<div class="a" style="left:95px;top:176px;width:79px;height:16px;background:#8c95a8"></div>
<div class="t" style="left:97px;top:178px;transform:scaleX(0.875);color:#000">Generic_Switch</div>
<div class="a" style="left:67px;top:200px;width:10px;height:1px;background-image:linear-gradient(90deg,#000 50%,transparent 50%);background-size:2px 1px"></div>
<svg class="a" style="left:80px;top:195px" width="9" height="10" viewBox="0 0 9 10" shape-rendering="crispEdges"><rect x="4" y="0" width="1" height="1" fill="#5a0000"/><rect x="3" y="1" width="3" height="1" fill="#5a0000"/><rect x="3" y="2" width="3" height="1" fill="#5a0000"/><rect x="2" y="3" width="5" height="1" fill="#5a0000"/><rect x="2" y="4" width="5" height="1" fill="#5a0000"/><rect x="1" y="5" width="7" height="1" fill="#5a0000"/><rect x="1" y="6" width="7" height="1" fill="#5a0000"/><rect x="0" y="7" width="9" height="1" fill="#5a0000"/><rect x="1" y="8" width="7" height="1" fill="#5a0000"/><rect x="3" y="9" width="3" height="1" fill="#5a0000"/><rect x="4" y="1" width="1" height="1" fill="#d80010"/><rect x="4" y="2" width="1" height="1" fill="#d80010"/><rect x="3" y="3" width="3" height="1" fill="#d80010"/><rect x="3" y="4" width="3" height="1" fill="#d80010"/><rect x="2" y="5" width="5" height="1" fill="#d80010"/><rect x="2" y="6" width="5" height="1" fill="#d80010"/><rect x="2" y="7" width="5" height="1" fill="#d80010"/><rect x="3" y="8" width="3" height="1" fill="#d80010"/><rect x="4" y="9" width="1" height="1" fill="#d80010"/><rect x="3" y="5" width="2" height="2" fill="#ff2030"/><rect x="3" y="7" width="3" height="1" fill="#f01020"/></svg>
<div class="t" style="left:97px;top:194px;transform:scaleX(0.875);color:#000">Simple_Large_CryoChamber</div>
<div class="a" style="left:67px;top:216px;width:10px;height:1px;background-image:linear-gradient(90deg,#000 50%,transparent 50%);background-size:2px 1px"></div>
<svg class="a" style="left:80px;top:211px" width="9" height="10" viewBox="0 0 9 10" shape-rendering="crispEdges"><rect x="4" y="0" width="1" height="1" fill="#5a0000"/><rect x="3" y="1" width="3" height="1" fill="#5a0000"/><rect x="3" y="2" width="3" height="1" fill="#5a0000"/><rect x="2" y="3" width="5" height="1" fill="#5a0000"/><rect x="2" y="4" width="5" height="1" fill="#5a0000"/><rect x="1" y="5" width="7" height="1" fill="#5a0000"/><rect x="1" y="6" width="7" height="1" fill="#5a0000"/><rect x="0" y="7" width="9" height="1" fill="#5a0000"/><rect x="1" y="8" width="7" height="1" fill="#5a0000"/><rect x="3" y="9" width="3" height="1" fill="#5a0000"/><rect x="4" y="1" width="1" height="1" fill="#d80010"/><rect x="4" y="2" width="1" height="1" fill="#d80010"/><rect x="3" y="3" width="3" height="1" fill="#d80010"/><rect x="3" y="4" width="3" height="1" fill="#d80010"/><rect x="2" y="5" width="5" height="1" fill="#d80010"/><rect x="2" y="6" width="5" height="1" fill="#d80010"/><rect x="2" y="7" width="5" height="1" fill="#d80010"/><rect x="3" y="8" width="3" height="1" fill="#d80010"/><rect x="4" y="9" width="1" height="1" fill="#d80010"/><rect x="3" y="5" width="2" height="2" fill="#ff2030"/><rect x="3" y="7" width="3" height="1" fill="#f01020"/></svg>
<div class="t" style="left:97px;top:210px;transform:scaleX(0.875);color:#000">Simple_Large_CryoChamber_Destroyed</div>
<div class="a" style="left:67px;top:232px;width:10px;height:1px;background-image:linear-gradient(90deg,#000 50%,transparent 50%);background-size:2px 1px"></div>
<div class="a" style="left:61px;top:228px;width:9px;height:9px;border:1px solid #4a4e56;background:#fff"></div>
<div class="a" style="left:63px;top:232px;width:5px;height:1px;background:#000"></div>
<div class="a" style="left:65px;top:230px;width:1px;height:5px;background:#000"></div>
<svg class="a" style="left:80px;top:227px" width="9" height="10" viewBox="0 0 9 10" shape-rendering="crispEdges"><rect x="4" y="0" width="1" height="1" fill="#5a0000"/><rect x="3" y="1" width="3" height="1" fill="#5a0000"/><rect x="3" y="2" width="3" height="1" fill="#5a0000"/><rect x="2" y="3" width="5" height="1" fill="#5a0000"/><rect x="2" y="4" width="5" height="1" fill="#5a0000"/><rect x="1" y="5" width="7" height="1" fill="#5a0000"/><rect x="1" y="6" width="7" height="1" fill="#5a0000"/><rect x="0" y="7" width="9" height="1" fill="#5a0000"/><rect x="1" y="8" width="7" height="1" fill="#5a0000"/><rect x="3" y="9" width="3" height="1" fill="#5a0000"/><rect x="4" y="1" width="1" height="1" fill="#d80010"/><rect x="4" y="2" width="1" height="1" fill="#d80010"/><rect x="3" y="3" width="3" height="1" fill="#d80010"/><rect x="3" y="4" width="3" height="1" fill="#d80010"/><rect x="2" y="5" width="5" height="1" fill="#d80010"/><rect x="2" y="6" width="5" height="1" fill="#d80010"/><rect x="2" y="7" width="5" height="1" fill="#d80010"/><rect x="3" y="8" width="3" height="1" fill="#d80010"/><rect x="4" y="9" width="1" height="1" fill="#d80010"/><rect x="3" y="5" width="2" height="2" fill="#ff2030"/><rect x="3" y="7" width="3" height="1" fill="#f01020"/></svg>
<div class="t" style="left:97px;top:226px;transform:scaleX(0.875);color:#000">Simple_M04_MissileRack</div>
<div class="a" style="left:67px;top:248px;width:10px;height:1px;background-image:linear-gradient(90deg,#000 50%,transparent 50%);background-size:2px 1px"></div>
<svg class="a" style="left:80px;top:243px" width="9" height="10" viewBox="0 0 9 10" shape-rendering="crispEdges"><rect x="4" y="0" width="1" height="1" fill="#5a0000"/><rect x="3" y="1" width="3" height="1" fill="#5a0000"/><rect x="3" y="2" width="3" height="1" fill="#5a0000"/><rect x="2" y="3" width="5" height="1" fill="#5a0000"/><rect x="2" y="4" width="5" height="1" fill="#5a0000"/><rect x="1" y="5" width="7" height="1" fill="#5a0000"/><rect x="1" y="6" width="7" height="1" fill="#5a0000"/><rect x="0" y="7" width="9" height="1" fill="#5a0000"/><rect x="1" y="8" width="7" height="1" fill="#5a0000"/><rect x="3" y="9" width="3" height="1" fill="#5a0000"/><rect x="4" y="1" width="1" height="1" fill="#d80010"/><rect x="4" y="2" width="1" height="1" fill="#d80010"/><rect x="3" y="3" width="3" height="1" fill="#d80010"/><rect x="3" y="4" width="3" height="1" fill="#d80010"/><rect x="2" y="5" width="5" height="1" fill="#d80010"/><rect x="2" y="6" width="5" height="1" fill="#d80010"/><rect x="2" y="7" width="5" height="1" fill="#d80010"/><rect x="3" y="8" width="3" height="1" fill="#d80010"/><rect x="4" y="9" width="1" height="1" fill="#d80010"/><rect x="3" y="5" width="2" height="2" fill="#ff2030"/><rect x="3" y="7" width="3" height="1" fill="#f01020"/></svg>
<div class="t" style="left:97px;top:242px;transform:scaleX(0.875);color:#000">Simple_MetalDrum_01</div>
<div class="a" style="left:67px;top:264px;width:10px;height:1px;background-image:linear-gradient(90deg,#000 50%,transparent 50%);background-size:2px 1px"></div>
<svg class="a" style="left:80px;top:259px" width="9" height="10" viewBox="0 0 9 10" shape-rendering="crispEdges"><rect x="4" y="0" width="1" height="1" fill="#5a0000"/><rect x="3" y="1" width="3" height="1" fill="#5a0000"/><rect x="3" y="2" width="3" height="1" fill="#5a0000"/><rect x="2" y="3" width="5" height="1" fill="#5a0000"/><rect x="2" y="4" width="5" height="1" fill="#5a0000"/><rect x="1" y="5" width="7" height="1" fill="#5a0000"/><rect x="1" y="6" width="7" height="1" fill="#5a0000"/><rect x="0" y="7" width="9" height="1" fill="#5a0000"/><rect x="1" y="8" width="7" height="1" fill="#5a0000"/><rect x="3" y="9" width="3" height="1" fill="#5a0000"/><rect x="4" y="1" width="1" height="1" fill="#d80010"/><rect x="4" y="2" width="1" height="1" fill="#d80010"/><rect x="3" y="3" width="3" height="1" fill="#d80010"/><rect x="3" y="4" width="3" height="1" fill="#d80010"/><rect x="2" y="5" width="5" height="1" fill="#d80010"/><rect x="2" y="6" width="5" height="1" fill="#d80010"/><rect x="2" y="7" width="5" height="1" fill="#d80010"/><rect x="3" y="8" width="3" height="1" fill="#d80010"/><rect x="4" y="9" width="1" height="1" fill="#d80010"/><rect x="3" y="5" width="2" height="2" fill="#ff2030"/><rect x="3" y="7" width="3" height="1" fill="#f01020"/></svg>
<div class="t" style="left:97px;top:258px;transform:scaleX(0.875);color:#000">Simple_MetalDrum_02</div>
<div class="a" style="left:67px;top:280px;width:10px;height:1px;background-image:linear-gradient(90deg,#000 50%,transparent 50%);background-size:2px 1px"></div>
<svg class="a" style="left:80px;top:275px" width="9" height="10" viewBox="0 0 9 10" shape-rendering="crispEdges"><rect x="4" y="0" width="1" height="1" fill="#5a0000"/><rect x="3" y="1" width="3" height="1" fill="#5a0000"/><rect x="3" y="2" width="3" height="1" fill="#5a0000"/><rect x="2" y="3" width="5" height="1" fill="#5a0000"/><rect x="2" y="4" width="5" height="1" fill="#5a0000"/><rect x="1" y="5" width="7" height="1" fill="#5a0000"/><rect x="1" y="6" width="7" height="1" fill="#5a0000"/><rect x="0" y="7" width="9" height="1" fill="#5a0000"/><rect x="1" y="8" width="7" height="1" fill="#5a0000"/><rect x="3" y="9" width="3" height="1" fill="#5a0000"/><rect x="4" y="1" width="1" height="1" fill="#d80010"/><rect x="4" y="2" width="1" height="1" fill="#d80010"/><rect x="3" y="3" width="3" height="1" fill="#d80010"/><rect x="3" y="4" width="3" height="1" fill="#d80010"/><rect x="2" y="5" width="5" height="1" fill="#d80010"/><rect x="2" y="6" width="5" height="1" fill="#d80010"/><rect x="2" y="7" width="5" height="1" fill="#d80010"/><rect x="3" y="8" width="3" height="1" fill="#d80010"/><rect x="4" y="9" width="1" height="1" fill="#d80010"/><rect x="3" y="5" width="2" height="2" fill="#ff2030"/><rect x="3" y="7" width="3" height="1" fill="#f01020"/></svg>
<div class="t" style="left:97px;top:274px;transform:scaleX(0.875);color:#000">Simple_MetalDrum_03</div>
<div class="a" style="left:67px;top:296px;width:10px;height:1px;background-image:linear-gradient(90deg,#000 50%,transparent 50%);background-size:2px 1px"></div>
<svg class="a" style="left:80px;top:291px" width="9" height="10" viewBox="0 0 9 10" shape-rendering="crispEdges"><rect x="4" y="0" width="1" height="1" fill="#5a0000"/><rect x="3" y="1" width="3" height="1" fill="#5a0000"/><rect x="3" y="2" width="3" height="1" fill="#5a0000"/><rect x="2" y="3" width="5" height="1" fill="#5a0000"/><rect x="2" y="4" width="5" height="1" fill="#5a0000"/><rect x="1" y="5" width="7" height="1" fill="#5a0000"/><rect x="1" y="6" width="7" height="1" fill="#5a0000"/><rect x="0" y="7" width="9" height="1" fill="#5a0000"/><rect x="1" y="8" width="7" height="1" fill="#5a0000"/><rect x="3" y="9" width="3" height="1" fill="#5a0000"/><rect x="4" y="1" width="1" height="1" fill="#d80010"/><rect x="4" y="2" width="1" height="1" fill="#d80010"/><rect x="3" y="3" width="3" height="1" fill="#d80010"/><rect x="3" y="4" width="3" height="1" fill="#d80010"/><rect x="2" y="5" width="5" height="1" fill="#d80010"/><rect x="2" y="6" width="5" height="1" fill="#d80010"/><rect x="2" y="7" width="5" height="1" fill="#d80010"/><rect x="3" y="8" width="3" height="1" fill="#d80010"/><rect x="4" y="9" width="1" height="1" fill="#d80010"/><rect x="3" y="5" width="2" height="2" fill="#ff2030"/><rect x="3" y="7" width="3" height="1" fill="#f01020"/></svg>
<div class="t" style="left:97px;top:290px;transform:scaleX(0.875);color:#000">Simple_MetalDrum_04</div>
<div class="a" style="left:67px;top:312px;width:10px;height:1px;background-image:linear-gradient(90deg,#000 50%,transparent 50%);background-size:2px 1px"></div>
<svg class="a" style="left:80px;top:307px" width="9" height="10" viewBox="0 0 9 10" shape-rendering="crispEdges"><rect x="4" y="0" width="1" height="1" fill="#5a0000"/><rect x="3" y="1" width="3" height="1" fill="#5a0000"/><rect x="3" y="2" width="3" height="1" fill="#5a0000"/><rect x="2" y="3" width="5" height="1" fill="#5a0000"/><rect x="2" y="4" width="5" height="1" fill="#5a0000"/><rect x="1" y="5" width="7" height="1" fill="#5a0000"/><rect x="1" y="6" width="7" height="1" fill="#5a0000"/><rect x="0" y="7" width="9" height="1" fill="#5a0000"/><rect x="1" y="8" width="7" height="1" fill="#5a0000"/><rect x="3" y="9" width="3" height="1" fill="#5a0000"/><rect x="4" y="1" width="1" height="1" fill="#d80010"/><rect x="4" y="2" width="1" height="1" fill="#d80010"/><rect x="3" y="3" width="3" height="1" fill="#d80010"/><rect x="3" y="4" width="3" height="1" fill="#d80010"/><rect x="2" y="5" width="5" height="1" fill="#d80010"/><rect x="2" y="6" width="5" height="1" fill="#d80010"/><rect x="2" y="7" width="5" height="1" fill="#d80010"/><rect x="3" y="8" width="3" height="1" fill="#d80010"/><rect x="4" y="9" width="1" height="1" fill="#d80010"/><rect x="3" y="5" width="2" height="2" fill="#ff2030"/><rect x="3" y="7" width="3" height="1" fill="#f01020"/></svg>
<div class="t" style="left:97px;top:306px;transform:scaleX(0.875);color:#000">Simple_MetalDrum_05</div>
<div class="a" style="left:67px;top:328px;width:10px;height:1px;background-image:linear-gradient(90deg,#000 50%,transparent 50%);background-size:2px 1px"></div>
<svg class="a" style="left:80px;top:323px" width="9" height="10" viewBox="0 0 9 10" shape-rendering="crispEdges"><rect x="4" y="0" width="1" height="1" fill="#5a0000"/><rect x="3" y="1" width="3" height="1" fill="#5a0000"/><rect x="3" y="2" width="3" height="1" fill="#5a0000"/><rect x="2" y="3" width="5" height="1" fill="#5a0000"/><rect x="2" y="4" width="5" height="1" fill="#5a0000"/><rect x="1" y="5" width="7" height="1" fill="#5a0000"/><rect x="1" y="6" width="7" height="1" fill="#5a0000"/><rect x="0" y="7" width="9" height="1" fill="#5a0000"/><rect x="1" y="8" width="7" height="1" fill="#5a0000"/><rect x="3" y="9" width="3" height="1" fill="#5a0000"/><rect x="4" y="1" width="1" height="1" fill="#d80010"/><rect x="4" y="2" width="1" height="1" fill="#d80010"/><rect x="3" y="3" width="3" height="1" fill="#d80010"/><rect x="3" y="4" width="3" height="1" fill="#d80010"/><rect x="2" y="5" width="5" height="1" fill="#d80010"/><rect x="2" y="6" width="5" height="1" fill="#d80010"/><rect x="2" y="7" width="5" height="1" fill="#d80010"/><rect x="3" y="8" width="3" height="1" fill="#d80010"/><rect x="4" y="9" width="1" height="1" fill="#d80010"/><rect x="3" y="5" width="2" height="2" fill="#ff2030"/><rect x="3" y="7" width="3" height="1" fill="#f01020"/></svg>
<div class="t" style="left:97px;top:322px;transform:scaleX(0.875);color:#000">Simple_MetalDrum_06</div>
<div class="a" style="left:67px;top:344px;width:10px;height:1px;background-image:linear-gradient(90deg,#000 50%,transparent 50%);background-size:2px 1px"></div>
<svg class="a" style="left:80px;top:339px" width="9" height="10" viewBox="0 0 9 10" shape-rendering="crispEdges"><rect x="4" y="0" width="1" height="1" fill="#5a0000"/><rect x="3" y="1" width="3" height="1" fill="#5a0000"/><rect x="3" y="2" width="3" height="1" fill="#5a0000"/><rect x="2" y="3" width="5" height="1" fill="#5a0000"/><rect x="2" y="4" width="5" height="1" fill="#5a0000"/><rect x="1" y="5" width="7" height="1" fill="#5a0000"/><rect x="1" y="6" width="7" height="1" fill="#5a0000"/><rect x="0" y="7" width="9" height="1" fill="#5a0000"/><rect x="1" y="8" width="7" height="1" fill="#5a0000"/><rect x="3" y="9" width="3" height="1" fill="#5a0000"/><rect x="4" y="1" width="1" height="1" fill="#d80010"/><rect x="4" y="2" width="1" height="1" fill="#d80010"/><rect x="3" y="3" width="3" height="1" fill="#d80010"/><rect x="3" y="4" width="3" height="1" fill="#d80010"/><rect x="2" y="5" width="5" height="1" fill="#d80010"/><rect x="2" y="6" width="5" height="1" fill="#d80010"/><rect x="2" y="7" width="5" height="1" fill="#d80010"/><rect x="3" y="8" width="3" height="1" fill="#d80010"/><rect x="4" y="9" width="1" height="1" fill="#d80010"/><rect x="3" y="5" width="2" height="2" fill="#ff2030"/><rect x="3" y="7" width="3" height="1" fill="#f01020"/></svg>
<div class="t" style="left:97px;top:338px;transform:scaleX(0.875);color:#000">Simple_MetalDrum_07</div>
<div class="a" style="left:67px;top:360px;width:10px;height:1px;background-image:linear-gradient(90deg,#000 50%,transparent 50%);background-size:2px 1px"></div>
<svg class="a" style="left:80px;top:355px" width="9" height="10" viewBox="0 0 9 10" shape-rendering="crispEdges"><rect x="4" y="0" width="1" height="1" fill="#5a0000"/><rect x="3" y="1" width="3" height="1" fill="#5a0000"/><rect x="3" y="2" width="3" height="1" fill="#5a0000"/><rect x="2" y="3" width="5" height="1" fill="#5a0000"/><rect x="2" y="4" width="5" height="1" fill="#5a0000"/><rect x="1" y="5" width="7" height="1" fill="#5a0000"/><rect x="1" y="6" width="7" height="1" fill="#5a0000"/><rect x="0" y="7" width="9" height="1" fill="#5a0000"/><rect x="1" y="8" width="7" height="1" fill="#5a0000"/><rect x="3" y="9" width="3" height="1" fill="#5a0000"/><rect x="4" y="1" width="1" height="1" fill="#d80010"/><rect x="4" y="2" width="1" height="1" fill="#d80010"/><rect x="3" y="3" width="3" height="1" fill="#d80010"/><rect x="3" y="4" width="3" height="1" fill="#d80010"/><rect x="2" y="5" width="5" height="1" fill="#d80010"/><rect x="2" y="6" width="5" height="1" fill="#d80010"/><rect x="2" y="7" width="5" height="1" fill="#d80010"/><rect x="3" y="8" width="3" height="1" fill="#d80010"/><rect x="4" y="9" width="1" height="1" fill="#d80010"/><rect x="3" y="5" width="2" height="2" fill="#ff2030"/><rect x="3" y="7" width="3" height="1" fill="#f01020"/></svg>
<div class="t" style="left:97px;top:354px;transform:scaleX(0.875);color:#000">Simple_MetalDrum_08</div>
<div class="a" style="left:67px;top:376px;width:10px;height:1px;background-image:linear-gradient(90deg,#000 50%,transparent 50%);background-size:2px 1px"></div>
<svg class="a" style="left:80px;top:371px" width="9" height="10" viewBox="0 0 9 10" shape-rendering="crispEdges"><rect x="4" y="0" width="1" height="1" fill="#5a0000"/><rect x="3" y="1" width="3" height="1" fill="#5a0000"/><rect x="3" y="2" width="3" height="1" fill="#5a0000"/><rect x="2" y="3" width="5" height="1" fill="#5a0000"/><rect x="2" y="4" width="5" height="1" fill="#5a0000"/><rect x="1" y="5" width="7" height="1" fill="#5a0000"/><rect x="1" y="6" width="7" height="1" fill="#5a0000"/><rect x="0" y="7" width="9" height="1" fill="#5a0000"/><rect x="1" y="8" width="7" height="1" fill="#5a0000"/><rect x="3" y="9" width="3" height="1" fill="#5a0000"/><rect x="4" y="1" width="1" height="1" fill="#d80010"/><rect x="4" y="2" width="1" height="1" fill="#d80010"/><rect x="3" y="3" width="3" height="1" fill="#d80010"/><rect x="3" y="4" width="3" height="1" fill="#d80010"/><rect x="2" y="5" width="5" height="1" fill="#d80010"/><rect x="2" y="6" width="5" height="1" fill="#d80010"/><rect x="2" y="7" width="5" height="1" fill="#d80010"/><rect x="3" y="8" width="3" height="1" fill="#d80010"/><rect x="4" y="9" width="1" height="1" fill="#d80010"/><rect x="3" y="5" width="2" height="2" fill="#ff2030"/><rect x="3" y="7" width="3" height="1" fill="#f01020"/></svg>
<div class="t" style="left:97px;top:370px;transform:scaleX(0.875);color:#000">Simple_MiniConsole</div>
<div class="a" style="left:67px;top:392px;width:10px;height:1px;background-image:linear-gradient(90deg,#000 50%,transparent 50%);background-size:2px 1px"></div>
<svg class="a" style="left:80px;top:387px" width="9" height="10" viewBox="0 0 9 10" shape-rendering="crispEdges"><rect x="4" y="0" width="1" height="1" fill="#5a0000"/><rect x="3" y="1" width="3" height="1" fill="#5a0000"/><rect x="3" y="2" width="3" height="1" fill="#5a0000"/><rect x="2" y="3" width="5" height="1" fill="#5a0000"/><rect x="2" y="4" width="5" height="1" fill="#5a0000"/><rect x="1" y="5" width="7" height="1" fill="#5a0000"/><rect x="1" y="6" width="7" height="1" fill="#5a0000"/><rect x="0" y="7" width="9" height="1" fill="#5a0000"/><rect x="1" y="8" width="7" height="1" fill="#5a0000"/><rect x="3" y="9" width="3" height="1" fill="#5a0000"/><rect x="4" y="1" width="1" height="1" fill="#d80010"/><rect x="4" y="2" width="1" height="1" fill="#d80010"/><rect x="3" y="3" width="3" height="1" fill="#d80010"/><rect x="3" y="4" width="3" height="1" fill="#d80010"/><rect x="2" y="5" width="5" height="1" fill="#d80010"/><rect x="2" y="6" width="5" height="1" fill="#d80010"/><rect x="2" y="7" width="5" height="1" fill="#d80010"/><rect x="3" y="8" width="3" height="1" fill="#d80010"/><rect x="4" y="9" width="1" height="1" fill="#d80010"/><rect x="3" y="5" width="2" height="2" fill="#ff2030"/><rect x="3" y="7" width="3" height="1" fill="#f01020"/></svg>
<div class="t" style="left:97px;top:386px;transform:scaleX(0.875);color:#000">Simple_MovieProjector</div>
<div class="a" style="left:67px;top:408px;width:10px;height:1px;background-image:linear-gradient(90deg,#000 50%,transparent 50%);background-size:2px 1px"></div>
<svg class="a" style="left:80px;top:403px" width="9" height="10" viewBox="0 0 9 10" shape-rendering="crispEdges"><rect x="4" y="0" width="1" height="1" fill="#5a0000"/><rect x="3" y="1" width="3" height="1" fill="#5a0000"/><rect x="3" y="2" width="3" height="1" fill="#5a0000"/><rect x="2" y="3" width="5" height="1" fill="#5a0000"/><rect x="2" y="4" width="5" height="1" fill="#5a0000"/><rect x="1" y="5" width="7" height="1" fill="#5a0000"/><rect x="1" y="6" width="7" height="1" fill="#5a0000"/><rect x="0" y="7" width="9" height="1" fill="#5a0000"/><rect x="1" y="8" width="7" height="1" fill="#5a0000"/><rect x="3" y="9" width="3" height="1" fill="#5a0000"/><rect x="4" y="1" width="1" height="1" fill="#d80010"/><rect x="4" y="2" width="1" height="1" fill="#d80010"/><rect x="3" y="3" width="3" height="1" fill="#d80010"/><rect x="3" y="4" width="3" height="1" fill="#d80010"/><rect x="2" y="5" width="5" height="1" fill="#d80010"/><rect x="2" y="6" width="5" height="1" fill="#d80010"/><rect x="2" y="7" width="5" height="1" fill="#d80010"/><rect x="3" y="8" width="3" height="1" fill="#d80010"/><rect x="4" y="9" width="1" height="1" fill="#d80010"/><rect x="3" y="5" width="2" height="2" fill="#ff2030"/><rect x="3" y="7" width="3" height="1" fill="#f01020"/></svg>
<div class="t" style="left:97px;top:402px;transform:scaleX(0.875);color:#000">Simple_Small_HologramProjector</div>
<div class="a" style="left:67px;top:424px;width:10px;height:1px;background-image:linear-gradient(90deg,#000 50%,transparent 50%);background-size:2px 1px"></div>
<svg class="a" style="left:80px;top:419px" width="9" height="10" viewBox="0 0 9 10" shape-rendering="crispEdges"><rect x="4" y="0" width="1" height="1" fill="#5a0000"/><rect x="3" y="1" width="3" height="1" fill="#5a0000"/><rect x="3" y="2" width="3" height="1" fill="#5a0000"/><rect x="2" y="3" width="5" height="1" fill="#5a0000"/><rect x="2" y="4" width="5" height="1" fill="#5a0000"/><rect x="1" y="5" width="7" height="1" fill="#5a0000"/><rect x="1" y="6" width="7" height="1" fill="#5a0000"/><rect x="0" y="7" width="9" height="1" fill="#5a0000"/><rect x="1" y="8" width="7" height="1" fill="#5a0000"/><rect x="3" y="9" width="3" height="1" fill="#5a0000"/><rect x="4" y="1" width="1" height="1" fill="#d80010"/><rect x="4" y="2" width="1" height="1" fill="#d80010"/><rect x="3" y="3" width="3" height="1" fill="#d80010"/><rect x="3" y="4" width="3" height="1" fill="#d80010"/><rect x="2" y="5" width="5" height="1" fill="#d80010"/><rect x="2" y="6" width="5" height="1" fill="#d80010"/><rect x="2" y="7" width="5" height="1" fill="#d80010"/><rect x="3" y="8" width="3" height="1" fill="#d80010"/><rect x="4" y="9" width="1" height="1" fill="#d80010"/><rect x="3" y="5" width="2" height="2" fill="#ff2030"/><rect x="3" y="7" width="3" height="1" fill="#f01020"/></svg>
<div class="t" style="left:97px;top:418px;transform:scaleX(0.875);color:#000">Simple_Sydney_SandM_Machine</div>
<div class="a" style="left:67px;top:440px;width:10px;height:1px;background-image:linear-gradient(90deg,#000 50%,transparent 50%);background-size:2px 1px"></div>
<svg class="a" style="left:80px;top:435px" width="9" height="10" viewBox="0 0 9 10" shape-rendering="crispEdges"><rect x="4" y="0" width="1" height="1" fill="#5a0000"/><rect x="3" y="1" width="3" height="1" fill="#5a0000"/><rect x="3" y="2" width="3" height="1" fill="#5a0000"/><rect x="2" y="3" width="5" height="1" fill="#5a0000"/><rect x="2" y="4" width="5" height="1" fill="#5a0000"/><rect x="1" y="5" width="7" height="1" fill="#5a0000"/><rect x="1" y="6" width="7" height="1" fill="#5a0000"/><rect x="0" y="7" width="9" height="1" fill="#5a0000"/><rect x="1" y="8" width="7" height="1" fill="#5a0000"/><rect x="3" y="9" width="3" height="1" fill="#5a0000"/><rect x="4" y="1" width="1" height="1" fill="#d80010"/><rect x="4" y="2" width="1" height="1" fill="#d80010"/><rect x="3" y="3" width="3" height="1" fill="#d80010"/><rect x="3" y="4" width="3" height="1" fill="#d80010"/><rect x="2" y="5" width="5" height="1" fill="#d80010"/><rect x="2" y="6" width="5" height="1" fill="#d80010"/><rect x="2" y="7" width="5" height="1" fill="#d80010"/><rect x="3" y="8" width="3" height="1" fill="#d80010"/><rect x="4" y="9" width="1" height="1" fill="#d80010"/><rect x="3" y="5" width="2" height="2" fill="#ff2030"/><rect x="3" y="7" width="3" height="1" fill="#f01020"/></svg>
<div class="t" style="left:97px;top:434px;transform:scaleX(0.875);color:#000">Simple_Sydney_SandM_Table</div>
<div class="a" style="left:67px;top:456px;width:10px;height:1px;background-image:linear-gradient(90deg,#000 50%,transparent 50%);background-size:2px 1px"></div>
<svg class="a" style="left:80px;top:451px" width="9" height="10" viewBox="0 0 9 10" shape-rendering="crispEdges"><rect x="4" y="0" width="1" height="1" fill="#5a0000"/><rect x="3" y="1" width="3" height="1" fill="#5a0000"/><rect x="3" y="2" width="3" height="1" fill="#5a0000"/><rect x="2" y="3" width="5" height="1" fill="#5a0000"/><rect x="2" y="4" width="5" height="1" fill="#5a0000"/><rect x="1" y="5" width="7" height="1" fill="#5a0000"/><rect x="1" y="6" width="7" height="1" fill="#5a0000"/><rect x="0" y="7" width="9" height="1" fill="#5a0000"/><rect x="1" y="8" width="7" height="1" fill="#5a0000"/><rect x="3" y="9" width="3" height="1" fill="#5a0000"/><rect x="4" y="1" width="1" height="1" fill="#d80010"/><rect x="4" y="2" width="1" height="1" fill="#d80010"/><rect x="3" y="3" width="3" height="1" fill="#d80010"/><rect x="3" y="4" width="3" height="1" fill="#d80010"/><rect x="2" y="5" width="5" height="1" fill="#d80010"/><rect x="2" y="6" width="5" height="1" fill="#d80010"/><rect x="2" y="7" width="5" height="1" fill="#d80010"/><rect x="3" y="8" width="3" height="1" fill="#d80010"/><rect x="4" y="9" width="1" height="1" fill="#d80010"/><rect x="3" y="5" width="2" height="2" fill="#ff2030"/><rect x="3" y="7" width="3" height="1" fill="#f01020"/></svg>
<div class="t" style="left:97px;top:450px;transform:scaleX(0.875);color:#000">Simple_Sydney_SandM_Wall</div>
<div class="a" style="left:48px;top:472px;width:10px;height:1px;background-image:linear-gradient(90deg,#000 50%,transparent 50%);background-size:2px 1px"></div>
<div class="a" style="left:42px;top:468px;width:9px;height:9px;border:1px solid #4a4e56;background:#fff"></div>
<div class="a" style="left:44px;top:472px;width:5px;height:1px;background:#000"></div>
<div class="a" style="left:46px;top:470px;width:1px;height:5px;background:#000"></div>
<svg class="a" style="left:61px;top:467px" width="9" height="10" viewBox="0 0 9 10" shape-rendering="crispEdges"><rect x="4" y="0" width="1" height="1" fill="#5a0000"/><rect x="3" y="1" width="3" height="1" fill="#5a0000"/><rect x="3" y="2" width="3" height="1" fill="#5a0000"/><rect x="2" y="3" width="5" height="1" fill="#5a0000"/><rect x="2" y="4" width="5" height="1" fill="#5a0000"/><rect x="1" y="5" width="7" height="1" fill="#5a0000"/><rect x="1" y="6" width="7" height="1" fill="#5a0000"/><rect x="0" y="7" width="9" height="1" fill="#5a0000"/><rect x="1" y="8" width="7" height="1" fill="#5a0000"/><rect x="3" y="9" width="3" height="1" fill="#5a0000"/><rect x="4" y="1" width="1" height="1" fill="#d80010"/><rect x="4" y="2" width="1" height="1" fill="#d80010"/><rect x="3" y="3" width="3" height="1" fill="#d80010"/><rect x="3" y="4" width="3" height="1" fill="#d80010"/><rect x="2" y="5" width="5" height="1" fill="#d80010"/><rect x="2" y="6" width="5" height="1" fill="#d80010"/><rect x="2" y="7" width="5" height="1" fill="#d80010"/><rect x="3" y="8" width="3" height="1" fill="#d80010"/><rect x="4" y="9" width="1" height="1" fill="#d80010"/><rect x="3" y="5" width="2" height="2" fill="#ff2030"/><rect x="3" y="7" width="3" height="1" fill="#f01020"/></svg>
<div class="t" style="left:78px;top:466px;transform:scaleX(0.875);color:#000">Simple_Objects_Level_x0</div>
<div class="a" style="left:29px;top:488px;width:10px;height:1px;background-image:linear-gradient(90deg,#000 50%,transparent 50%);background-size:2px 1px"></div>
<div class="a" style="left:23px;top:484px;width:9px;height:9px;border:1px solid #4a4e56;background:#fff"></div>
<div class="a" style="left:25px;top:488px;width:5px;height:1px;background:#000"></div>
<div class="a" style="left:27px;top:486px;width:1px;height:5px;background:#000"></div>
<svg class="a" style="left:38px;top:480px" width="16" height="16" viewBox="0 0 16 16" shape-rendering="crispEdges">
<path d="M1.5 3.5 L2.5 2.5 H6.5 L7.5 3.5 H13.5 V13.5 H1.5z" fill="#f0f08a" stroke="#707050"/>
<rect x="2" y="5" width="11" height="8" fill="#e4e46a"/>
<path d="M2 4.5h11" stroke="#ffffc8"/>
<rect x="14" y="4" width="1" height="11" fill="#000"/>
<rect x="2" y="14" width="13" height="1" fill="#000"/>
</svg>
<div class="t" style="left:59px;top:482px;transform:scaleX(0.875);color:#000">Soldier</div>
<div class="a" style="left:29px;top:504px;width:10px;height:1px;background-image:linear-gradient(90deg,#000 50%,transparent 50%);background-size:2px 1px"></div>
<div class="a" style="left:23px;top:500px;width:9px;height:9px;border:1px solid #4a4e56;background:#fff"></div>
<div class="a" style="left:25px;top:504px;width:5px;height:1px;background:#000"></div>
<div class="a" style="left:27px;top:502px;width:1px;height:5px;background:#000"></div>
<svg class="a" style="left:38px;top:496px" width="16" height="16" viewBox="0 0 16 16" shape-rendering="crispEdges">
<path d="M1.5 3.5 L2.5 2.5 H6.5 L7.5 3.5 H13.5 V13.5 H1.5z" fill="#f0f08a" stroke="#707050"/>
<rect x="2" y="5" width="11" height="8" fill="#e4e46a"/>
<path d="M2 4.5h11" stroke="#ffffc8"/>
<rect x="14" y="4" width="1" height="11" fill="#000"/>
<rect x="2" y="14" width="13" height="1" fill="#000"/>
</svg>
<div class="t" style="left:59px;top:498px;transform:scaleX(0.875);color:#000">Spawner</div>
<div class="a" style="left:29px;top:520px;width:10px;height:1px;background-image:linear-gradient(90deg,#000 50%,transparent 50%);background-size:2px 1px"></div>
<div class="a" style="left:23px;top:516px;width:9px;height:9px;border:1px solid #4a4e56;background:#fff"></div>
<div class="a" style="left:25px;top:520px;width:5px;height:1px;background:#000"></div>
<div class="a" style="left:27px;top:518px;width:1px;height:5px;background:#000"></div>
<svg class="a" style="left:38px;top:512px" width="16" height="16" viewBox="0 0 16 16" shape-rendering="crispEdges">
<path d="M1.5 3.5 L2.5 2.5 H6.5 L7.5 3.5 H13.5 V13.5 H1.5z" fill="#f0f08a" stroke="#707050"/>
<rect x="2" y="5" width="11" height="8" fill="#e4e46a"/>
<path d="M2 4.5h11" stroke="#ffffc8"/>
<rect x="14" y="4" width="1" height="11" fill="#000"/>
<rect x="2" y="14" width="13" height="1" fill="#000"/>
</svg>
<div class="t" style="left:59px;top:514px;transform:scaleX(0.875);color:#000">Special Effects</div>
<div class="a" style="left:29px;top:536px;width:10px;height:1px;background-image:linear-gradient(90deg,#000 50%,transparent 50%);background-size:2px 1px"></div>
<div class="a" style="left:23px;top:532px;width:9px;height:9px;border:1px solid #4a4e56;background:#fff"></div>
<div class="a" style="left:25px;top:536px;width:5px;height:1px;background:#000"></div>
<div class="a" style="left:27px;top:534px;width:1px;height:5px;background:#000"></div>
<svg class="a" style="left:38px;top:528px" width="16" height="16" viewBox="0 0 16 16" shape-rendering="crispEdges">
<path d="M1.5 3.5 L2.5 2.5 H6.5 L7.5 3.5 H13.5 V13.5 H1.5z" fill="#f0f08a" stroke="#707050"/>
<rect x="2" y="5" width="11" height="8" fill="#e4e46a"/>
<path d="M2 4.5h11" stroke="#ffffc8"/>
<rect x="14" y="4" width="1" height="11" fill="#000"/>
<rect x="2" y="14" width="13" height="1" fill="#000"/>
</svg>
<div class="t" style="left:59px;top:530px;transform:scaleX(0.875);color:#000">Transition</div>
<div class="a" style="left:29px;top:552px;width:10px;height:1px;background-image:linear-gradient(90deg,#000 50%,transparent 50%);background-size:2px 1px"></div>
<div class="a" style="left:23px;top:548px;width:9px;height:9px;border:1px solid #4a4e56;background:#fff"></div>
<div class="a" style="left:25px;top:552px;width:5px;height:1px;background:#000"></div>
<div class="a" style="left:27px;top:550px;width:1px;height:5px;background:#000"></div>
<svg class="a" style="left:38px;top:544px" width="16" height="16" viewBox="0 0 16 16" shape-rendering="crispEdges">
<path d="M1.5 3.5 L2.5 2.5 H6.5 L7.5 3.5 H13.5 V13.5 H1.5z" fill="#f0f08a" stroke="#707050"/>
<rect x="2" y="5" width="11" height="8" fill="#e4e46a"/>
<path d="M2 4.5h11" stroke="#ffffc8"/>
<rect x="14" y="4" width="1" height="11" fill="#000"/>
<rect x="2" y="14" width="13" height="1" fill="#000"/>
</svg>
<div class="t" style="left:59px;top:546px;transform:scaleX(0.875);color:#000">Vehicle</div>
<div class="a" style="left:10px;top:568px;width:10px;height:1px;background-image:linear-gradient(90deg,#000 50%,transparent 50%);background-size:2px 1px"></div>
<div class="a" style="left:4px;top:564px;width:9px;height:9px;border:1px solid #4a4e56;background:#fff"></div>
<div class="a" style="left:6px;top:568px;width:5px;height:1px;background:#000"></div>
<div class="a" style="left:8px;top:566px;width:1px;height:5px;background:#000"></div>
<svg class="a" style="left:19px;top:560px" width="16" height="16" viewBox="0 0 16 16" shape-rendering="crispEdges">
<path d="M1.5 3.5 L2.5 2.5 H6.5 L7.5 3.5 H13.5 V13.5 H1.5z" fill="#f0f08a" stroke="#707050"/>
<rect x="2" y="5" width="11" height="8" fill="#e4e46a"/>
<path d="M2 4.5h11" stroke="#ffffc8"/>
<rect x="14" y="4" width="1" height="11" fill="#000"/>
<rect x="2" y="14" width="13" height="1" fill="#000"/>
</svg>
<div class="t" style="left:40px;top:562px;transform:scaleX(0.875);color:#000">Buildings</div>
<div class="a" style="left:10px;top:584px;width:10px;height:1px;background-image:linear-gradient(90deg,#000 50%,transparent 50%);background-size:2px 1px"></div>
<div class="a" style="left:4px;top:580px;width:9px;height:9px;border:1px solid #4a4e56;background:#fff"></div>
<div class="a" style="left:6px;top:584px;width:5px;height:1px;background:#000"></div>
<div class="a" style="left:8px;top:582px;width:1px;height:5px;background:#000"></div>
<svg class="a" style="left:19px;top:576px" width="16" height="16" viewBox="0 0 16 16" shape-rendering="crispEdges">
<path d="M1.5 3.5 L2.5 2.5 H6.5 L7.5 3.5 H13.5 V13.5 H1.5z" fill="#f0f08a" stroke="#707050"/>
<rect x="2" y="5" width="11" height="8" fill="#e4e46a"/>
<path d="M2 4.5h11" stroke="#ffffc8"/>
<rect x="14" y="4" width="1" height="11" fill="#000"/>
<rect x="2" y="14" width="13" height="1" fill="#000"/>
</svg>
<div class="t" style="left:40px;top:578px;transform:scaleX(0.875);color:#000">Munitions</div>
<div class="a" style="left:10px;top:600px;width:10px;height:1px;background-image:linear-gradient(90deg,#000 50%,transparent 50%);background-size:2px 1px"></div>
<div class="a" style="left:4px;top:596px;width:9px;height:9px;border:1px solid #4a4e56;background:#fff"></div>
<div class="a" style="left:6px;top:600px;width:5px;height:1px;background:#000"></div>
<div class="a" style="left:8px;top:598px;width:1px;height:5px;background:#000"></div>
<svg class="a" style="left:19px;top:592px" width="16" height="16" viewBox="0 0 16 16" shape-rendering="crispEdges">
<path d="M1.5 3.5 L2.5 2.5 H6.5 L7.5 3.5 H13.5 V13.5 H1.5z" fill="#f0f08a" stroke="#707050"/>
<rect x="2" y="5" width="11" height="8" fill="#e4e46a"/>
<path d="M2 4.5h11" stroke="#ffffc8"/>
<rect x="14" y="4" width="1" height="11" fill="#000"/>
<rect x="2" y="14" width="13" height="1" fill="#000"/>
</svg>
<div class="t" style="left:40px;top:594px;transform:scaleX(0.875);color:#000">Dummy Object</div>
<div class="a" style="left:10px;top:616px;width:10px;height:1px;background-image:linear-gradient(90deg,#000 50%,transparent 50%);background-size:2px 1px"></div>
<div class="a" style="left:4px;top:612px;width:9px;height:9px;border:1px solid #4a4e56;background:#fff"></div>
<div class="a" style="left:6px;top:616px;width:5px;height:1px;background:#000"></div>
<div class="a" style="left:8px;top:614px;width:1px;height:5px;background:#000"></div>
<svg class="a" style="left:19px;top:608px" width="16" height="16" viewBox="0 0 16 16" shape-rendering="crispEdges">
<path d="M1.5 3.5 L2.5 2.5 H6.5 L7.5 3.5 H13.5 V13.5 H1.5z" fill="#f0f08a" stroke="#707050"/>
<rect x="2" y="5" width="11" height="8" fill="#e4e46a"/>
<path d="M2 4.5h11" stroke="#ffffc8"/>
<rect x="14" y="4" width="1" height="11" fill="#000"/>
<rect x="2" y="14" width="13" height="1" fill="#000"/>
</svg>
<div class="t" style="left:40px;top:610px;transform:scaleX(0.875);color:#000">Cover Spots</div>
<div class="a" style="left:10px;top:632px;width:10px;height:1px;background-image:linear-gradient(90deg,#000 50%,transparent 50%);background-size:2px 1px"></div>
<div class="a" style="left:4px;top:628px;width:9px;height:9px;border:1px solid #4a4e56;background:#fff"></div>
<div class="a" style="left:6px;top:632px;width:5px;height:1px;background:#000"></div>
<div class="a" style="left:8px;top:630px;width:1px;height:5px;background:#000"></div>
<svg class="a" style="left:19px;top:624px" width="16" height="16" viewBox="0 0 16 16" shape-rendering="crispEdges">
<path d="M1.5 3.5 L2.5 2.5 H6.5 L7.5 3.5 H13.5 V13.5 H1.5z" fill="#f0f08a" stroke="#707050"/>
<rect x="2" y="5" width="11" height="8" fill="#e4e46a"/>
<path d="M2 4.5h11" stroke="#ffffc8"/>
<rect x="14" y="4" width="1" height="11" fill="#000"/>
<rect x="2" y="14" width="13" height="1" fill="#000"/>
</svg>
<div class="t" style="left:40px;top:626px;transform:scaleX(0.875);color:#000">Light</div>
<div class="a" style="left:10px;top:648px;width:10px;height:1px;background-image:linear-gradient(90deg,#000 50%,transparent 50%);background-size:2px 1px"></div>
<div class="a" style="left:4px;top:644px;width:9px;height:9px;border:1px solid #4a4e56;background:#fff"></div>
<div class="a" style="left:6px;top:648px;width:5px;height:1px;background:#000"></div>
<div class="a" style="left:8px;top:646px;width:1px;height:5px;background:#000"></div>
<svg class="a" style="left:19px;top:640px" width="16" height="16" viewBox="0 0 16 16" shape-rendering="crispEdges">
<path d="M1.5 3.5 L2.5 2.5 H6.5 L7.5 3.5 H13.5 V13.5 H1.5z" fill="#f0f08a" stroke="#707050"/>
<rect x="2" y="5" width="11" height="8" fill="#e4e46a"/>
<path d="M2 4.5h11" stroke="#ffffc8"/>
<rect x="14" y="4" width="1" height="11" fill="#000"/>
<rect x="2" y="14" width="13" height="1" fill="#000"/>
</svg>
<div class="t" style="left:40px;top:642px;transform:scaleX(0.875);color:#000">Sound</div>
<div class="a" style="left:10px;top:664px;width:10px;height:1px;background-image:linear-gradient(90deg,#000 50%,transparent 50%);background-size:2px 1px"></div>
<div class="a" style="left:4px;top:660px;width:9px;height:9px;border:1px solid #4a4e56;background:#fff"></div>
<div class="a" style="left:6px;top:664px;width:5px;height:1px;background:#000"></div>
<div class="a" style="left:8px;top:662px;width:1px;height:5px;background:#000"></div>
<svg class="a" style="left:19px;top:656px" width="16" height="16" viewBox="0 0 16 16" shape-rendering="crispEdges">
<path d="M1.5 3.5 L2.5 2.5 H6.5 L7.5 3.5 H13.5 V13.5 H1.5z" fill="#f0f08a" stroke="#707050"/>
<rect x="2" y="5" width="11" height="8" fill="#e4e46a"/>
<path d="M2 4.5h11" stroke="#ffffc8"/>
<rect x="14" y="4" width="1" height="11" fill="#000"/>
<rect x="2" y="14" width="13" height="1" fill="#000"/>
</svg>
<div class="t" style="left:40px;top:658px;transform:scaleX(0.875);color:#000">Waypath</div>
<div class="a" style="left:10px;top:680px;width:10px;height:1px;background-image:linear-gradient(90deg,#000 50%,transparent 50%);background-size:2px 1px"></div>
<div class="a" style="left:4px;top:676px;width:9px;height:9px;border:1px solid #4a4e56;background:#fff"></div>
<div class="a" style="left:6px;top:680px;width:5px;height:1px;background:#000"></div>
<div class="a" style="left:8px;top:678px;width:1px;height:5px;background:#000"></div>
<svg class="a" style="left:19px;top:672px" width="16" height="16" viewBox="0 0 16 16" shape-rendering="crispEdges">
<path d="M1.5 3.5 L2.5 2.5 H6.5 L7.5 3.5 H13.5 V13.5 H1.5z" fill="#f0f08a" stroke="#707050"/>
<rect x="2" y="5" width="11" height="8" fill="#e4e46a"/>
<path d="M2 4.5h11" stroke="#ffffc8"/>
<rect x="14" y="4" width="1" height="11" fill="#000"/>
<rect x="2" y="14" width="13" height="1" fill="#000"/>
</svg>
<div class="t" style="left:40px;top:674px;transform:scaleX(0.875);color:#000">Twiddlers</div>
<div class="a" style="left:10px;top:696px;width:10px;height:1px;background-image:linear-gradient(90deg,#000 50%,transparent 50%);background-size:2px 1px"></div>
<div class="a" style="left:4px;top:692px;width:9px;height:9px;border:1px solid #4a4e56;background:#fff"></div>
<div class="a" style="left:6px;top:696px;width:5px;height:1px;background:#000"></div>
<div class="a" style="left:8px;top:694px;width:1px;height:5px;background:#000"></div>
<svg class="a" style="left:19px;top:688px" width="16" height="16" viewBox="0 0 16 16" shape-rendering="crispEdges">
<path d="M1.5 3.5 L2.5 2.5 H6.5 L7.5 3.5 H13.5 V13.5 H1.5z" fill="#f0f08a" stroke="#707050"/>
<rect x="2" y="5" width="11" height="8" fill="#e4e46a"/>
<path d="M2 4.5h11" stroke="#ffffc8"/>
<rect x="14" y="4" width="1" height="11" fill="#000"/>
<rect x="2" y="14" width="13" height="1" fill="#000"/>
</svg>
<div class="t" style="left:40px;top:690px;transform:scaleX(0.875);color:#000">Editor Objects</div>
<div class="a" style="left:10px;top:712px;width:10px;height:1px;background-image:linear-gradient(90deg,#000 50%,transparent 50%);background-size:2px 1px"></div>
<div class="a" style="left:4px;top:708px;width:9px;height:9px;border:1px solid #4a4e56;background:#fff"></div>
<div class="a" style="left:6px;top:712px;width:5px;height:1px;background:#000"></div>
<div class="a" style="left:8px;top:710px;width:1px;height:5px;background:#000"></div>
<svg class="a" style="left:19px;top:704px" width="16" height="16" viewBox="0 0 16 16" shape-rendering="crispEdges">
<path d="M1.5 3.5 L2.5 2.5 H6.5 L7.5 3.5 H13.5 V13.5 H1.5z" fill="#f0f08a" stroke="#707050"/>
<rect x="2" y="5" width="11" height="8" fill="#e4e46a"/>
<path d="M2 4.5h11" stroke="#ffffc8"/>
<rect x="14" y="4" width="1" height="11" fill="#000"/>
<rect x="2" y="14" width="13" height="1" fill="#000"/>
</svg>
<div class="t" style="left:40px;top:706px;transform:scaleX(0.875);color:#000">Global Settings</div>
</div>
<div class="a" style="left:1246px;top:112px;width:17px;height:721px;background:#eef0f4"></div>
<svg class="a" style="left:1247px;top:112px" width="16" height="17" viewBox="0 0 16 17"><defs><linearGradient id="g1247_112" x1="0" y1="0" x2="0" y2="1"><stop offset="0" stop-color="#f4f6fa"/><stop offset="0.3" stop-color="#b4c0d0"/><stop offset="1" stop-color="#647894"/></linearGradient></defs><rect x="0.6" y="0.6" width="14.8" height="15.8" rx="2" fill="url(#g1247_112)" stroke="#1c222a" stroke-width="1.2"/><path d="M4.0 10.5 L8.0 6.5 L12.0 10.5" fill="none" stroke="#000" stroke-width="2"/></svg>
<svg class="a" style="left:1247px;top:816px" width="16" height="17" viewBox="0 0 16 17"><defs><linearGradient id="g1247_816" x1="0" y1="0" x2="0" y2="1"><stop offset="0" stop-color="#f4f6fa"/><stop offset="0.3" stop-color="#b4c0d0"/><stop offset="1" stop-color="#647894"/></linearGradient></defs><rect x="0.6" y="0.6" width="14.8" height="15.8" rx="2" fill="url(#g1247_816)" stroke="#1c222a" stroke-width="1.2"/><path d="M4.0 6.5 L8.0 10.5 L12.0 6.5" fill="none" stroke="#000" stroke-width="2"/></svg>
<svg class="a" style="left:1247px;top:368px" width="16" height="447" viewBox="0 0 16 447"><defs><linearGradient id="vt1247_368" x1="0" y1="0" x2="1" y2="0">
<stop offset="0" stop-color="#d0d8e2"/><stop offset="0.3" stop-color="#a8b6c8"/><stop offset="0.6" stop-color="#7890a8"/><stop offset="1" stop-color="#5a6a80"/></linearGradient></defs>
<rect x="0.6" y="0.6" width="14.8" height="445.8" rx="2" fill="url(#vt1247_368)" stroke="#1c222a" stroke-width="1.2"/>
<rect x="1.5" y="1.5" width="13" height="444" rx="1" fill="none" stroke="#f4f6fa" stroke-width="1"/>
<rect x="5" y="219" width="6" height="1" fill="#fff"/><rect x="5" y="220" width="6" height="1" fill="#000"/>
<rect x="5" y="221" width="6" height="1" fill="#fff"/><rect x="5" y="222" width="6" height="1" fill="#000"/>
<rect x="5" y="223" width="6" height="1" fill="#fff"/><rect x="5" y="224" width="6" height="1" fill="#000"/>
<rect x="5" y="225" width="6" height="1" fill="#fff"/><rect x="5" y="226" width="6" height="1" fill="#000"/></svg>
<div class="a" style="left:985px;top:833px;width:261px;height:17px;background:#eef0f4"></div>
<svg class="a" style="left:985px;top:834px" width="17" height="16" viewBox="0 0 17 16"><defs><linearGradient id="g985_834" x1="0" y1="0" x2="0" y2="1"><stop offset="0" stop-color="#f4f6fa"/><stop offset="0.3" stop-color="#b4c0d0"/><stop offset="1" stop-color="#647894"/></linearGradient></defs><rect x="0.6" y="0.6" width="15.8" height="14.8" rx="2" fill="url(#g985_834)" stroke="#1c222a" stroke-width="1.2"/><path d="M10.5 4.0 L6.5 8.0 L10.5 12.0" fill="none" stroke="#000" stroke-width="2"/></svg>
<svg class="a" style="left:1229px;top:834px" width="17" height="16" viewBox="0 0 17 16"><defs><linearGradient id="g1229_834" x1="0" y1="0" x2="0" y2="1"><stop offset="0" stop-color="#f4f6fa"/><stop offset="0.3" stop-color="#b4c0d0"/><stop offset="1" stop-color="#647894"/></linearGradient></defs><rect x="0.6" y="0.6" width="15.8" height="14.8" rx="2" fill="url(#g1229_834)" stroke="#1c222a" stroke-width="1.2"/><path d="M6.5 4.0 L10.5 8.0 L6.5 12.0" fill="none" stroke="#000" stroke-width="2"/></svg>
<svg class="a" style="left:1002px;top:834px" width="207" height="16" viewBox="0 0 207 16"><defs><linearGradient id="ht1002_834" x1="0" y1="0" x2="0" y2="1">
<stop offset="0" stop-color="#d0d8e2"/><stop offset="0.3" stop-color="#a8b6c8"/><stop offset="0.6" stop-color="#7890a8"/><stop offset="1" stop-color="#5a6a80"/></linearGradient></defs>
<rect x="0.6" y="0.6" width="205.8" height="14.8" rx="2" fill="url(#ht1002_834)" stroke="#1c222a" stroke-width="1.2"/>
<rect x="1.5" y="1.5" width="204" height="13" rx="1" fill="none" stroke="#f4f6fa" stroke-width="1"/>
<rect x="99" y="5" width="1" height="6" fill="#fff"/><rect x="100" y="5" width="1" height="6" fill="#000"/>
<rect x="101" y="5" width="1" height="6" fill="#fff"/><rect x="102" y="5" width="1" height="6" fill="#000"/>
<rect x="103" y="5" width="1" height="6" fill="#fff"/><rect x="104" y="5" width="1" height="6" fill="#000"/>
<rect x="105" y="5" width="1" height="6" fill="#fff"/><rect x="106" y="5" width="1" height="6" fill="#000"/></svg>
<div class="a" style="left:1246px;top:833px;width:17px;height:18px;background:#8e98aa"></div>
<svg class="a" style="left:987px;top:862px" width="12" height="12" viewBox="0 0 12 12" shape-rendering="crispEdges"><path d="M4.5 0.5h3v4h4v3h-4v4h-3v-4h-4v-3h4z" fill="#20c020" stroke="#004000"/></svg>
<div class="t" style="left:985px;top:876px;transform:scaleX(0.93);font-size:10px">Add</div>
<svg class="a" style="left:1020px;top:861px" width="13" height="13" viewBox="0 0 13 13" shape-rendering="crispEdges"><path d="M6 0h1v1H6zM5 1h1v1H5zM7 1h1v1H7zM4 2h1v1H4zM8 2h1v1H8zM6 2h1v1H6zM3 3h1v1H3zM9 3h1v1H9zM2 4h1v1H2zM10 4h1v1H10zM1 5h1v1H1zM11 5h1v1h-1zM0 6h1v1H0zM12 6h1v1h-1zM1 7h1v1H1zM11 7h1v1h-1zM2 8h1v1H2zM10 8h1v1h-1zM3 9h1v1H3zM9 9h1v1H9zM4 10h1v1H4zM8 10h1v1H8zM5 11h1v1H5zM7 11h1v1H7zM6 12h1v1H6zM6 4h1v1H6zM6 6h1v1H6zM6 8h1v1H6zM6 10h1v1H6zM2 6h1v1H2zM4 6h1v1H4zM8 6h1v1H8zM10 6h1v1h-1zM5 5h1v1H5zM7 5h1v1H7zM5 7h1v1H5zM7 7h1v1H7z" fill="#20a020"/><path d="M5 3h1v1H5zM7 3h1v1H7zM3 5h1v1H3zM9 5h1v1H9zM3 7h1v1H3zM9 7h1v1H9zM5 9h1v1H5zM7 9h1v1H7z" fill="#80e080"/></svg>
<div class="t" style="left:1014px;top:876px;transform:scaleX(0.93);font-size:10px">Temp</div>
<svg class="a" style="left:1050px;top:861px" width="16" height="14" viewBox="0 0 16 14"><path d="M8 2v3M8 9v3M2 7h3M11 7h3M4 3l2 2M12 3l-2 2M4 11l2-2M12 11l-2-2" stroke="#20242c" stroke-width="1.1"/><path d="M8 0v1M8 13v1M0 7h1M15 7h1M2 1l1 1M14 1l-1 1M2 13l1-1M14 13l-1-1" stroke="#6a7080" stroke-width="0.8"/><rect x="7" y="6" width="2" height="2" fill="#fff"/></svg>
<div class="t" style="left:1048px;top:876px;transform:scaleX(0.93);font-size:10px">Make</div>
<svg class="a" style="left:1084px;top:861px" width="16" height="16" viewBox="0 0 16 16"><path d="M1.5 14.5 L9.5 6.5" stroke="#201018" stroke-width="2.4"/><path d="M1.5 14.5 L9 7" stroke="#804040" stroke-width="0.7"/><path d="M6 3.5 Q9 0 12 1.5 L15 4.5 L12.5 7.5 L11 6 L9.5 7.5 L7.5 5.5z" fill="#f0d020" stroke="#201000" stroke-width="0.9"/><path d="M12 1.5 Q14 3 12.5 5" stroke="#a08000" stroke-width="0.8" fill="none"/></svg>
<div class="t" style="left:1082px;top:876px;transform:scaleX(0.93);font-size:10px">Mod</div>
<div class="a" style="left:1111px;top:859px;width:1px;height:31px;background:#6a7282"></div>
<div class="a" style="left:1112px;top:859px;width:1px;height:31px;background:#e8ecf2"></div>
<div class="a" style="left:1122px;top:857px;width:14px;font-weight:bold;font-size:18px;line-height:20px;color:#f0f020;text-align:center;text-shadow:0 0 1px #a0a000">?</div>
<div class="t" style="left:1122px;top:876px;transform:scaleX(0.93);font-size:10px">Info</div>
<svg class="a" style="left:1154px;top:861px" width="20" height="16" viewBox="0 0 20 16"><path d="M1.5 3.5 Q1.5 1.5 3.5 1.5 H15.5 V13.5 Q15.5 14.5 14.5 14.5 H3.5 Q1.5 14.5 1.5 12.5z" fill="#1a2ab8" stroke="#000" stroke-width="0.9"/><rect x="3" y="5" width="11" height="8" fill="#dfe8f8"/><path d="M4 3.2 L5 4.2 L6 3.2 L7 4.2 L8 3.2 L9 4.2 L10 3.2 L11 4.2 L12 3.2" stroke="#c8d4f0" stroke-width="0.7" fill="none"/><rect x="4" y="6.5" width="4" height="4" fill="#1a2ab8"/><path d="M9 7h4M9 9h4M9 11h4M4 12h4" stroke="#1a2ab8" stroke-width="1"/><path d="M15.5 4.5 Q19 5 18 8.5 L16 13" fill="#b8c4e0" stroke="#000" stroke-width="0.9"/></svg>
<div class="t" style="left:1155px;top:876px;transform:scaleX(0.93);font-size:10px">Xtra</div>
<svg class="a" style="left:1185px;top:874px" width="5" height="3" viewBox="0 0 5 3" shape-rendering="crispEdges"><path d="M0 0h5v1h-1v1h-1v1h-1v-1h-1v-1h-1z" fill="#000"/></svg>
<div class="a" style="left:1196px;top:859px;width:1px;height:31px;background:#6a7282"></div>
<div class="a" style="left:1197px;top:859px;width:1px;height:31px;background:#e8ecf2"></div>
<svg class="a" style="left:1209px;top:862px" width="14" height="13" viewBox="0 0 14 13"><path d="M1 1 L13 12 M13 1 L1 12" stroke="#8a1020" stroke-width="2"/><path d="M2 0.5 L13.5 11" stroke="#f0d0d8" stroke-width="0.5" transform="translate(0.8 0)"/></svg>
<div class="t" style="left:1209px;top:876px;transform:scaleX(0.93);font-size:10px">Del</div>
<div class="a" style="left:0px;top:903px;width:1280px;height:2px;background:#dfe4ec"></div>
<div class="a" style="left:0px;top:905px;width:1280px;height:72px;background:#8e98aa"></div>
<div class="a" style="left:4px;top:909px;width:1276px;height:63px;border-top:2px solid #464c57;border-left:2px solid #464c57;border-bottom:1px solid #e4e8ef;border-right:1px solid #e4e8ef;background:#8e98aa"></div>
<div class="t" style="left:7px;top:913px;transform:scaleX(0.888);color:#0a0c10">TimeManager::Update: warning, frame 631 was slow (16711 ms)</div>
<div class="t" style="left:7px;top:926px;transform:scaleX(0.888);color:#0a0c10">TimeManager::Update: warning, frame 632 was slow (4765 ms)</div>
<div class="t" style="left:7px;top:939px;transform:scaleX(0.888);color:#0a0c10">TimeManager::Update: warning, frame 633 was slow (15105 ms)</div>
<div class="a" style="left:1262px;top:911px;width:16px;height:59px;background:#e9ecf1"></div>
<svg class="a" style="left:1262px;top:911px" width="16" height="16" viewBox="0 0 16 16"><defs><linearGradient id="g1262_911" x1="0" y1="0" x2="0" y2="1"><stop offset="0" stop-color="#f4f6fa"/><stop offset="0.3" stop-color="#b4c0d0"/><stop offset="1" stop-color="#647894"/></linearGradient></defs><rect x="0.6" y="0.6" width="14.8" height="14.8" rx="2" fill="url(#g1262_911)" stroke="#1c222a" stroke-width="1.2"/><path d="M4.0 10.0 L8.0 6.0 L12.0 10.0" fill="none" stroke="#000" stroke-width="2"/></svg>
<svg class="a" style="left:1262px;top:945px" width="16" height="7" viewBox="0 0 16 7"><rect x="0.6" y="0.6" width="14.8" height="5.8" rx="1.5" fill="#8496ae" stroke="#1c222a" stroke-width="1.2"/><rect x="2" y="1.5" width="12" height="2" fill="#c8d2de"/></svg>
<svg class="a" style="left:1262px;top:953px" width="16" height="17" viewBox="0 0 16 17"><defs><linearGradient id="g1262_953" x1="0" y1="0" x2="0" y2="1"><stop offset="0" stop-color="#f4f6fa"/><stop offset="0.3" stop-color="#b4c0d0"/><stop offset="1" stop-color="#647894"/></linearGradient></defs><rect x="0.6" y="0.6" width="14.8" height="15.8" rx="2" fill="url(#g1262_953)" stroke="#1c222a" stroke-width="1.2"/><path d="M4.0 6.5 L8.0 10.5 L12.0 6.5" fill="none" stroke="#000" stroke-width="2"/></svg>
<div class="a" style="left:0px;top:976px;width:1280px;height:1px;background:#4a505c"></div>
<div class="a" style="left:0px;top:977px;width:1280px;height:1px;background:#e2e6ee"></div>
<div class="a" style="left:0px;top:978px;width:1280px;height:16px;background:#8e98aa"></div>
<div class="t" style="left:2px;top:982px;transform:scaleX(0.875);color:#0a0c10">Ready</div>
<div class="a" style="left:810px;top:979px;width:181px;height:16px;border-top:1px solid #5c6270;border-left:1px solid #5c6270;border-bottom:1px solid #dfe3ea;border-right:1px solid #dfe3ea"></div>
<div class="a" style="left:993px;top:979px;width:86px;height:16px;border-top:1px solid #5c6270;border-left:1px solid #5c6270;border-bottom:1px solid #dfe3ea;border-right:1px solid #dfe3ea"></div>
<div class="a" style="left:1080px;top:979px;width:110px;height:16px;border-top:1px solid #5c6270;border-left:1px solid #5c6270;border-bottom:1px solid #dfe3ea;border-right:1px solid #dfe3ea"></div>
<div class="a" style="left:1191px;top:979px;width:89px;height:16px;border-top:1px solid #5c6270;border-left:1px solid #5c6270;border-bottom:1px solid #dfe3ea;border-right:1px solid #dfe3ea"></div>
<div class="t" style="left:812px;top:982px;transform:scaleX(0.935);color:#0a0c10">Camera (0.00,0.00,80.00)</div>
<div class="t" style="left:1193px;top:982px;transform:scaleX(0.93);color:#0a0c10">Polys 108</div>
<svg class="a" style="left:1265px;top:980px" width="14" height="14" viewBox="0 0 14 14"><path d="M13 2 L2 13 M13 6 L6 13 M13 10 L10 13" stroke="#e8ecf2" stroke-width="1"/><path d="M13 3 L3 13 M13 7 L7 13 M13 11 L11 13" stroke="#5c6270" stroke-width="1"/></svg>
<div class="a" style="left:0px;top:994px;width:1280px;height:30px;background:linear-gradient(#5a0408 0px,#9a0a14 3px,#8a0810 10px,#4a0408 20px,#2a0204 29px)"></div>
<div class="a" style="left:0px;top:994px;width:1280px;height:1px;background:#050608"></div>
<svg class="a" style="left:0px;top:995px" width="92" height="29" viewBox="0 0 92 29"><defs><linearGradient id="stg" x1="0" y1="0" x2="0" y2="1">
<stop offset="0" stop-color="#788aa0"/><stop offset="0.15" stop-color="#5e7088"/><stop offset="0.55" stop-color="#4e5e74"/><stop offset="1" stop-color="#36404e"/></linearGradient></defs>
<path d="M0 1 H80 L91 13.5 L80 26 H0z" fill="url(#stg)"/></svg>
<svg class="a" style="left:11px;top:999px" width="19" height="17" viewBox="0 0 19 17">
<path d="M1 3 q4-2 8 0 l-1.5 6 q-4-2-8 0z" fill="#f05a20"/>
<path d="M10 3.5 q4 2 8 0 l-1.5 6 q-4 2-8 0z" fill="#60b020"/>
<path d="M-0.5 10 q4-2 8 0 l-1.5 6 q-4-2-8 0z" fill="#4a88e0" transform="translate(1 0)"/>
<path d="M9 10.5 q4 2 8 0 l-1.5 6 q-4 2-8 0z" fill="#f0c020"/></svg>
<div class="a" style="left:35px;top:997px;font-weight:bold;font-size:15.5px;line-height:20px;color:#fff;letter-spacing:-0.3px;text-shadow:1px 1px 1px #202830">Start</div>
<svg class="a" style="left:105px;top:1001px" width="16" height="16" viewBox="0 0 16 16"><rect x="1.5" y="0.5" width="13" height="14" fill="#e8f4ff" stroke="#a0c8f0" stroke-width="0.8"/><path d="M10 3.5 H5 V11.5 H10" fill="none" stroke="#2a5a98" stroke-width="1.8"/><path d="M6 8.5 L9 8.5 L12 4" fill="none" stroke="#102040" stroke-width="1.3"/></svg>
<svg class="a" style="left:129px;top:1001px" width="16" height="16" viewBox="0 0 16 16"><path fill-rule="evenodd" d="M13.4 9.4 H5.4 Q5.8 12 8.4 12 Q10.3 12 11.5 10.6 L13.2 11.6 Q11.3 14.4 8.2 14.4 Q2.8 14.2 2.6 8.6 Q2.8 3.2 8.2 3 Q13.6 3.2 13.4 9.4z M5.4 7.2 H10.8 Q10.5 5.2 8.1 5.1 Q5.8 5.2 5.4 7.2z" fill="#3aa0e8" stroke="#0a3070" stroke-width="0.6"/><path d="M1.8 14.8 Q0 11 6 5 Q12 -0.5 14.6 1.2 Q15.8 2.5 13.2 6" fill="none" stroke="#f0d8e8" stroke-width="1"/></svg>
<svg class="a" style="left:153px;top:1001px" width="16" height="16" viewBox="0 0 16 16"><circle cx="8" cy="8" r="7" fill="#f4f6fa"/><path d="M8 1 A7 7 0 0 1 15 8" stroke="#60b040" stroke-width="1.2" fill="none"/><path d="M15 8 A7 7 0 0 1 8 15" stroke="#e8a020" stroke-width="1.2" fill="none"/><path d="M8 15 A7 7 0 0 1 1 8" stroke="#3060c0" stroke-width="1.2" fill="none"/><path d="M1 8 A7 7 0 0 1 8 1" stroke="#e04040" stroke-width="1.2" fill="none"/><circle cx="8" cy="8" r="4.2" fill="#dfe6f2"/><path d="M6.5 5.5 L11 8 L6.5 10.5z" fill="#102880"/></svg>
<div class="a" style="left:181px;top:995px;width:137px;height:29px;background:linear-gradient(#6c7684 0px,#4c5664 3px,#56627a 12px,#2e343e 18px,#20252c 24px,#3a424e 29px);border-radius:3px 3px 0 0;border-left:1px solid #7a8494;border-top:1px solid #8690a0"></div>
<svg class="a" style="left:190px;top:1002px" width="16" height="16" viewBox="0 0 16 16" shape-rendering="crispEdges"><rect x="1.5" y="3.5" width="13" height="10" fill="#e8e070" stroke="#000"/><rect x="7" y="0" width="3" height="5" fill="#000"/><rect x="8" y="1" width="1" height="2" fill="#fff"/><path d="M3 7h3M8 7h4M3 10h5M10 10h2" stroke="#000" stroke-width="1.2"/><rect x="2" y="14" width="14" height="1" fill="#e8ecf0"/></svg>
<div class="t" style="left:209px;top:1004px;transform:scaleX(0.92);color:#fff">WhiteWolf - Nach...</div>
<div class="a" style="left:322px;top:995px;width:138px;height:29px;background:linear-gradient(#6c7684 0px,#4c5664 3px,#56627a 12px,#2e343e 18px,#20252c 24px,#3a424e 29px);border-radius:3px 3px 0 0;border-left:1px solid #7a8494;border-top:1px solid #8690a0"></div>
<svg class="a" style="left:331px;top:1002px" width="16" height="16" viewBox="0 0 16 16" shape-rendering="crispEdges"><rect x="1.5" y="3.5" width="13" height="10" fill="#e8e070" stroke="#000"/><rect x="7" y="0" width="3" height="5" fill="#000"/><rect x="8" y="1" width="1" height="2" fill="#fff"/><path d="M3 7h3M8 7h4M3 10h5M10 10h2" stroke="#000" stroke-width="1.2"/><rect x="2" y="14" width="14" height="1" fill="#e8ecf0"/></svg>
<div class="t" style="left:350px;top:1004px;transform:scaleX(0.92);color:#fff">Gini - Nachrichten...</div>
<div class="a" style="left:464px;top:995px;width:139px;height:29px;background:linear-gradient(#6c7684 0px,#4c5664 3px,#56627a 12px,#2e343e 18px,#20252c 24px,#3a424e 29px);border-radius:3px 3px 0 0;border-left:1px solid #7a8494;border-top:1px solid #8690a0"></div>
<svg class="a" style="left:473px;top:1002px" width="16" height="16" viewBox="0 0 16 16"><path fill-rule="evenodd" d="M13.4 9.4 H5.4 Q5.8 12 8.4 12 Q10.3 12 11.5 10.6 L13.2 11.6 Q11.3 14.4 8.2 14.4 Q2.8 14.2 2.6 8.6 Q2.8 3.2 8.2 3 Q13.6 3.2 13.4 9.4z M5.4 7.2 H10.8 Q10.5 5.2 8.1 5.1 Q5.8 5.2 5.4 7.2z" fill="#3aa0e8" stroke="#0a3070" stroke-width="0.6"/><path d="M1.8 14.8 Q0 11 6 5 Q12 -0.5 14.6 1.2 Q15.8 2.5 13.2 6" fill="none" stroke="#f0d8e8" stroke-width="1"/></svg>
<div class="t" style="left:500px;top:1004px;transform:scaleX(0.92);color:#fff">Internet Explorer</div>
<svg class="a" style="left:594px;top:1009px" width="7" height="4" viewBox="0 0 7 4" shape-rendering="crispEdges"><path d="M0 0h7v1h-1v1h-1v1h-1v1h-1v-1h-1v-1h-1v-1h-1z" fill="#fff"/></svg>
<div class="a" style="left:490px;top:1004px;width:4px;height:8px;background:#b01010;border-radius:2px"></div>
<div class="a" style="left:606px;top:995px;width:139px;height:29px;background:linear-gradient(#6c7684 0px,#4c5664 3px,#56627a 12px,#2e343e 18px,#20252c 24px,#3a424e 29px);border-radius:3px 3px 0 0;border-left:1px solid #7a8494;border-top:1px solid #8690a0"></div>
<svg class="a" style="left:615px;top:1002px" width="16" height="16" viewBox="0 0 16 16">
<rect x="0" y="0" width="16" height="16" fill="#3cb898"/>
<rect x="0.5" y="0.5" width="15" height="15" fill="none" stroke="#2a9878" stroke-width="1"/>
<path d="M4.5 11.5 L11.5 4.5" stroke="#fff" stroke-width="2.4"/>
<circle cx="12" cy="4" r="2.6" fill="#fff"/><circle cx="13.2" cy="2.8" r="1.1" fill="#1a7058"/>
<circle cx="4.2" cy="11.8" r="2.6" fill="#fff"/><circle cx="3" cy="13" r="1.1" fill="#1a7058"/>
<path d="M7 7 L13.5 13.5" stroke="#fff" stroke-width="2.6"/>
<path d="M1.8 6.2 L6.2 1.8 L9.2 4.8 L4.8 9.2z" fill="#fff"/>
<path d="M5.5 7 L7.5 5" stroke="#1a7058" stroke-width="0.8"/>
</svg>
<div class="t" style="left:634px;top:1004px;transform:scaleX(0.92);color:#fff">Untitled - Comma...</div>
<div class="a" style="left:748px;top:995px;width:138px;height:29px;background:linear-gradient(#6c7684 0px,#4c5664 3px,#56627a 12px,#2e343e 18px,#20252c 24px,#3a424e 29px);border-radius:3px 3px 0 0;border-left:1px solid #7a8494;border-top:1px solid #8690a0"></div>
<svg class="a" style="left:757px;top:1002px" width="16" height="16" viewBox="0 0 16 16"><path d="M3 14 L5 4 L7 14z" fill="#e0a020"/><path d="M6 14 L9 3 L11 14z" fill="#d04040"/><path d="M9 14 L12 5 L14 14z" fill="#4090e0"/><rect x="3" y="11" width="11" height="4" fill="#60b040" opacity="0.8"/></svg>
<div class="t" style="left:776px;top:1004px;transform:scaleX(0.92);color:#fff">1 - Paint</div>
<svg class="a" style="left:894px;top:996px" width="168" height="27" viewBox="0 0 168 27"><defs>
<linearGradient id="mpg" x1="0" y1="0" x2="0" y2="1"><stop offset="0" stop-color="#6a7280"/><stop offset="0.4" stop-color="#3a404a"/><stop offset="1" stop-color="#1a1e24"/></linearGradient>
<linearGradient id="mpc" x1="0" y1="0" x2="0" y2="1"><stop offset="0" stop-color="#202428"/><stop offset="0.5" stop-color="#0c0e10"/><stop offset="1" stop-color="#30343a"/></linearGradient>
<radialGradient id="mpb" cx="50%" cy="70%" r="60%"><stop offset="0" stop-color="#60b0ff"/><stop offset="0.7" stop-color="#1040c0"/><stop offset="1" stop-color="#082060"/></radialGradient>
<linearGradient id="mps" x1="0" y1="0" x2="0" y2="1"><stop offset="0" stop-color="#a0a8b4"/><stop offset="0.5" stop-color="#505860"/><stop offset="1" stop-color="#70787e"/></linearGradient>
</defs>
<rect x="0" y="0" width="168" height="27" fill="url(#mpg)" stroke="#0a0c10"/>
<circle cx="10" cy="13.5" r="7" fill="#e8f0f8"/><path d="M4 11 a6.5 6.5 0 0 1 12 0" stroke="#f0a020" stroke-width="1.5" fill="none"/><circle cx="10" cy="13.5" r="4" fill="#2040c0"/><path d="M8.5 11 L13 13.5 L8.5 16z" fill="#fff"/>
<rect x="23" y="3" width="130" height="21" rx="10.5" fill="url(#mpc)" stroke="#5a626c" stroke-width="0.8"/>
<rect x="36" y="10" width="7" height="7" fill="#e8ecf0"/>
<rect x="48" y="6" width="40" height="15" rx="7" fill="url(#mps)" stroke="#202428" stroke-width="0.6"/>
<rect x="52" y="9" width="2" height="9" fill="#fff"/><path d="M62 9 L55 13.5 L62 18z" fill="#fff"/>
<rect x="92" y="6" width="28" height="15" rx="7" fill="url(#mps)" stroke="#202428" stroke-width="0.6"/>
<path d="M103 9 L110 13.5 L103 18z" fill="#fff"/><rect x="111" y="9" width="2" height="9" fill="#fff"/>
<circle cx="84" cy="13.5" r="12" fill="url(#mpb)" stroke="#082060" stroke-width="1"/>
<rect x="80" y="8" width="2.5" height="11" fill="#fff"/><rect x="85.5" y="8" width="2.5" height="11" fill="#fff"/>
<path d="M124 11h2l3-3v11l-3-3h-2z" fill="#e8ecf0"/><path d="M131 10 q2 3.5 0 7 M133 9 q3 4.5 0 9" stroke="#e8ecf0" stroke-width="1" fill="none"/>
<path d="M139 12h6l-3 3z" fill="#fff"/>
<path d="M158 6 l2.5-2.5 l2.5 2.5 M158 9 l2.5 2.5 l2.5-2.5" stroke="#fff" stroke-width="1.2" fill="none"/>
<rect x="158" y="18" width="5" height="4" fill="none" stroke="#fff" stroke-width="1"/><rect x="160" y="16" width="5" height="4" fill="none" stroke="#fff" stroke-width="1"/>
</svg>
<div class="t" style="left:1074px;top:1003px;transform:scaleX(0.875);color:#fff;">Desktop</div>
<div class="a" style="left:1120px;top:995px;font-weight:bold;font-size:15px;line-height:14px;color:#fff">&#187;</div>
<div class="t" style="left:1140px;top:1003px;transform:scaleX(0.875);color:#fff;">DE</div>
<svg class="a" style="left:1155px;top:995px" width="125" height="29" viewBox="0 0 125 29"><defs><linearGradient id="trg" x1="0" y1="0" x2="0" y2="1">
<stop offset="0" stop-color="#7484a0"/><stop offset="0.15" stop-color="#5e6e8a"/><stop offset="0.6" stop-color="#4c5a74"/><stop offset="1" stop-color="#2a3244"/></linearGradient></defs>
<path d="M12 0 H125 V29 H12 L0 14.5z" fill="url(#trg)"/></svg>
<svg class="a" style="left:1160px;top:1002px" width="13" height="13" viewBox="0 0 13 13"><path d="M7 1.5 L2 6.5 L7 11.5 M11 1.5 L6 6.5 L11 11.5" stroke="#000" stroke-width="1.6" fill="none" transform="translate(1 0.5)"/><path d="M7 1.5 L2 6.5 L7 11.5 M11 1.5 L6 6.5 L11 11.5" stroke="#801018" stroke-width="1.6" fill="none"/></svg>
<svg class="a" style="left:1177px;top:1001px" width="16" height="16" viewBox="0 0 16 16"><circle cx="8" cy="8" r="7.5" fill="#0a5a18"/><circle cx="5.5" cy="3.5" r="2.3" fill="#30c040"/><circle cx="10.5" cy="3.5" r="2.3" fill="#30c040"/><circle cx="5.5" cy="12.5" r="2.3" fill="#30c040"/><circle cx="10.5" cy="12.5" r="2.3" fill="#30c040"/><path d="M1 8 Q8 2.5 15 8 Q8 13.5 1 8z" fill="#fff" stroke="#000" stroke-width="1.2"/><ellipse cx="8" cy="8" rx="2.6" ry="2.2" fill="#102080"/></svg>
<svg class="a" style="left:1195px;top:1001px" width="16" height="16" viewBox="0 0 16 16" shape-rendering="crispEdges"><rect x="0" y="0" width="15" height="16" fill="#fff"/><path d="M1 1 H5 L7 9 L10 1 H14 L7 15 H2z" fill="#e80010"/><path d="M9 9 L13 13 M10 14 H14 V10" stroke="#000" stroke-width="2" fill="none"/></svg>
<svg class="a" style="left:1212px;top:1001px" width="16" height="16" viewBox="0 0 16 16"><path d="M1 1 H9 Q14 1 14 5.5 Q14 9 10.5 9.5 L14.5 15 H10 L7 10 H5 V15 H1z" fill="#1018c8"/><path d="M5 4 H9 Q10.5 4 10.5 5.5 Q10.5 7 9 7 H5z" fill="#e8ecf8"/><path d="M12.5 2 L13.5 4" stroke="#fff" stroke-width="1"/><path d="M2 9 L4 14 L6 10.5 L8 14 L10 9" stroke="#f02020" stroke-width="1.6" fill="none"/><rect x="14" y="12" width="2" height="4" fill="#000"/></svg>
<div class="t" style="left:1236px;top:1003px;transform:scaleX(0.875);color:#fff;">17:53</div>
<div class="a" style="left:419px;top:257px;width:442px;height:484px;background:#2a0406"></div>
<div class="a" style="left:422px;top:278px;width:436px;height:460px;background:#8e98aa"></div>
<div class="a" style="left:420px;top:258px;width:440px;height:20px;background:linear-gradient(#7a0010 0px,#8c0012 5px,#6a000c 9px,#300006 14px,#1e0004 20px)"></div>
<div class="t" style="left:421px;top:263px;transform:scaleX(0.875);color:#f4eee8;font-size:11.5px;">Edit object</div>
<svg class="a" style="left:844px;top:262px" width="12" height="12" viewBox="0 0 12 12"><rect x="0.5" y="0.5" width="11" height="11" rx="3" fill="#706870" opacity="0.7"/><path d="M3 3 L9 9 M9 3 L3 9" stroke="#fff" stroke-width="2.2"/></svg>
<div class="a" style="left:428px;top:304px;width:424px;height:398px;border-top:1px solid #e6e9f0;border-left:1px solid #e6e9f0;border-right:1px solid #4a505c;border-bottom:1px solid #4a505c;box-shadow:inset -1px -1px #6a7282"></div>
<div class="a" style="left:429px;top:286px;width:50px;height:18px;border-top:1px solid #e6e9f0;border-left:1px solid #e6e9f0;border-right:2px solid #4a505c;border-top-left-radius:2px;border-top-right-radius:2px;background:#8e98aa"></div>
<div class="t" style="left:436px;top:290px;transform:scaleX(0.875);">General</div>
<div class="a" style="left:479px;top:286px;width:79px;height:18px;border-top:1px solid #e6e9f0;border-left:1px solid #e6e9f0;border-right:2px solid #4a505c;border-top-left-radius:2px;border-top-right-radius:2px;background:#8e98aa"></div>
<div class="t" style="left:485px;top:290px;transform:scaleX(0.875);">Physics Model</div>
<div class="a" style="left:611px;top:286px;width:79px;height:18px;border-top:1px solid #e6e9f0;border-left:1px solid #e6e9f0;border-right:2px solid #4a505c;border-top-left-radius:2px;border-top-right-radius:2px;background:#8e98aa"></div>
<div class="t" style="left:615px;top:290px;transform:scaleX(0.875);">Dependencies</div>
<div class="a" style="left:690px;top:286px;width:44px;height:18px;border-top:1px solid #e6e9f0;border-left:1px solid #e6e9f0;border-right:2px solid #4a505c;border-top-left-radius:2px;border-top-right-radius:2px;background:#8e98aa"></div>
<div class="t" style="left:696px;top:290px;transform:scaleX(0.875);">Scripts</div>
<div class="a" style="left:559px;top:284px;width:52px;height:21px;border-top:1px solid #e6e9f0;border-left:1px solid #e6e9f0;border-right:2px solid #4a505c;border-top-left-radius:2px;border-top-right-radius:2px;background:#8e98aa"></div>
<div class="t" style="left:565px;top:288px;transform:scaleX(0.875);">Settings</div>
<div class="a" style="left:821px;top:311px;width:17px;height:383px;background-color:#c0c6d0;background-image:repeating-conic-gradient(#f2f4f8 0 25%,#8e98aa 0 50%);background-size:2px 2px"></div>
<div class="a" style="left:821px;top:311px;width:17px;height:17px;border-top:1px solid #eef1f5;border-left:1px solid #eef1f5;border-bottom:2px solid #3e434c;border-right:2px solid #3e434c;background:#8e98aa;"></div>
<svg class="a" style="left:826px;top:317px" width="7" height="4" viewBox="0 0 7 4" shape-rendering="crispEdges"><path d="M3 0h1v1h1v1h1v1h1v1H0V3h1V2h1V1h1z" fill="#000"/></svg>
<div class="a" style="left:821px;top:328px;width:17px;height:17px;border-top:1px solid #eef1f5;border-left:1px solid #eef1f5;border-bottom:2px solid #3e434c;border-right:2px solid #3e434c;background:#8e98aa;"></div>
<div class="a" style="left:821px;top:677px;width:17px;height:17px;border-top:1px solid #eef1f5;border-left:1px solid #eef1f5;border-bottom:2px solid #3e434c;border-right:2px solid #3e434c;background:#8e98aa;"></div>
<svg class="a" style="left:826px;top:683px" width="7" height="4" viewBox="0 0 7 4" shape-rendering="crispEdges"><path d="M0 0h7v1H6v1H5v1H4v1H3V3H2V2H1V1H0z" fill="#000"/></svg>
<div class="t" style="left:442px;top:326px;transform:scaleX(0.875);color:#0c1018">Health</div>
<div class="a" style="left:480px;top:321px;width:324px;height:21px;border-top:2px solid #40454e;border-left:2px solid #40454e;border-bottom:1px solid #e6e9f0;border-right:1px solid #e6e9f0;background:#fff"></div>
<div class="t" style="left:482px;top:324px;transform:scaleX(0.875);color:#000">500.000</div>
<div class="a" style="left:786px;top:323px;width:16px;height:8px;border-top:1px solid #eef1f5;border-left:1px solid #eef1f5;border-bottom:2px solid #3e434c;border-right:2px solid #3e434c;background:#8e98aa;border-bottom-width:1px;border-right-width:1px"></div>
<div class="a" style="left:786px;top:331px;width:16px;height:9px;border-top:1px solid #eef1f5;border-left:1px solid #eef1f5;border-bottom:2px solid #3e434c;border-right:2px solid #3e434c;background:#8e98aa;border-bottom-width:1px;border-right-width:1px"></div>
<svg class="a" style="left:792px;top:325px" width="5" height="3" viewBox="0 0 5 3" shape-rendering="crispEdges"><path d="M2 0h1v1h1v1h1v1H0V2h1V1h1z" fill="#000"/></svg>
<svg class="a" style="left:792px;top:334px" width="5" height="3" viewBox="0 0 5 3" shape-rendering="crispEdges"><path d="M0 0h5v1H4v1H3v1H2V2H1V1H0z" fill="#000"/></svg>
<div class="t" style="left:442px;top:357px;transform:scaleX(0.875);color:#0c1018">HealthMax</div>
<div class="a" style="left:500px;top:352px;width:304px;height:21px;border-top:2px solid #40454e;border-left:2px solid #40454e;border-bottom:1px solid #e6e9f0;border-right:1px solid #e6e9f0;background:#fff"></div>
<div class="t" style="left:502px;top:355px;transform:scaleX(0.875);color:#000">500.000</div>
<div class="a" style="left:786px;top:354px;width:16px;height:8px;border-top:1px solid #eef1f5;border-left:1px solid #eef1f5;border-bottom:2px solid #3e434c;border-right:2px solid #3e434c;background:#8e98aa;border-bottom-width:1px;border-right-width:1px"></div>
<div class="a" style="left:786px;top:362px;width:16px;height:9px;border-top:1px solid #eef1f5;border-left:1px solid #eef1f5;border-bottom:2px solid #3e434c;border-right:2px solid #3e434c;background:#8e98aa;border-bottom-width:1px;border-right-width:1px"></div>
<svg class="a" style="left:792px;top:356px" width="5" height="3" viewBox="0 0 5 3" shape-rendering="crispEdges"><path d="M2 0h1v1h1v1h1v1H0V2h1V1h1z" fill="#000"/></svg>
<svg class="a" style="left:792px;top:365px" width="5" height="3" viewBox="0 0 5 3" shape-rendering="crispEdges"><path d="M0 0h5v1H4v1H3v1H2V2H1V1H0z" fill="#000"/></svg>
<div class="t" style="left:442px;top:388px;transform:scaleX(0.875);color:#0c1018">Skin</div>
<div class="a" style="left:470px;top:383px;width:341px;height:21px;border-top:2px solid #40454e;border-left:2px solid #40454e;border-bottom:1px solid #e6e9f0;border-right:1px solid #e6e9f0;background:#fff"></div>
<div class="t" style="left:474px;top:388px;transform:scaleX(0.875);color:#000">Blamo</div>
<div class="a" style="left:793px;top:385px;width:16px;height:17px;border-top:1px solid #eef1f5;border-left:1px solid #eef1f5;border-bottom:2px solid #3e434c;border-right:2px solid #3e434c;background:#8e98aa;"></div>
<svg class="a" style="left:797px;top:391px" width="7" height="4" viewBox="0 0 7 4" shape-rendering="crispEdges"><path d="M0 0h7v1H6v1H5v1H4v1H3V3H2V2H1V1H0z" fill="#000"/></svg>
<div class="t" style="left:442px;top:419px;transform:scaleX(0.875);color:#0c1018">ShieldStrength</div>
<div class="a" style="left:518px;top:414px;width:286px;height:21px;border-top:2px solid #40454e;border-left:2px solid #40454e;border-bottom:1px solid #e6e9f0;border-right:1px solid #e6e9f0;background:#fff"></div>
<div class="t" style="left:520px;top:417px;transform:scaleX(0.875);color:#000">0.000</div>
<div class="a" style="left:786px;top:416px;width:16px;height:8px;border-top:1px solid #eef1f5;border-left:1px solid #eef1f5;border-bottom:2px solid #3e434c;border-right:2px solid #3e434c;background:#8e98aa;border-bottom-width:1px;border-right-width:1px"></div>
<div class="a" style="left:786px;top:424px;width:16px;height:9px;border-top:1px solid #eef1f5;border-left:1px solid #eef1f5;border-bottom:2px solid #3e434c;border-right:2px solid #3e434c;background:#8e98aa;border-bottom-width:1px;border-right-width:1px"></div>
<svg class="a" style="left:792px;top:418px" width="5" height="3" viewBox="0 0 5 3" shape-rendering="crispEdges"><path d="M2 0h1v1h1v1h1v1H0V2h1V1h1z" fill="#000"/></svg>
<svg class="a" style="left:792px;top:427px" width="5" height="3" viewBox="0 0 5 3" shape-rendering="crispEdges"><path d="M0 0h5v1H4v1H3v1H2V2H1V1H0z" fill="#000"/></svg>
<div class="t" style="left:442px;top:450px;transform:scaleX(0.875);color:#0c1018">ShieldStrengthMax</div>
<div class="a" style="left:538px;top:445px;width:266px;height:21px;border-top:2px solid #40454e;border-left:2px solid #40454e;border-bottom:1px solid #e6e9f0;border-right:1px solid #e6e9f0;background:#fff"></div>
<div class="t" style="left:540px;top:448px;transform:scaleX(0.875);color:#000">0.000</div>
<div class="a" style="left:786px;top:447px;width:16px;height:8px;border-top:1px solid #eef1f5;border-left:1px solid #eef1f5;border-bottom:2px solid #3e434c;border-right:2px solid #3e434c;background:#8e98aa;border-bottom-width:1px;border-right-width:1px"></div>
<div class="a" style="left:786px;top:455px;width:16px;height:9px;border-top:1px solid #eef1f5;border-left:1px solid #eef1f5;border-bottom:2px solid #3e434c;border-right:2px solid #3e434c;background:#8e98aa;border-bottom-width:1px;border-right-width:1px"></div>
<svg class="a" style="left:792px;top:449px" width="5" height="3" viewBox="0 0 5 3" shape-rendering="crispEdges"><path d="M2 0h1v1h1v1h1v1H0V2h1V1h1z" fill="#000"/></svg>
<svg class="a" style="left:792px;top:458px" width="5" height="3" viewBox="0 0 5 3" shape-rendering="crispEdges"><path d="M0 0h5v1H4v1H3v1H2V2H1V1H0z" fill="#000"/></svg>
<div class="t" style="left:442px;top:481px;transform:scaleX(0.875);color:#0c1018">Shield Type</div>
<div class="a" style="left:505px;top:476px;width:306px;height:21px;border-top:2px solid #40454e;border-left:2px solid #40454e;border-bottom:1px solid #e6e9f0;border-right:1px solid #e6e9f0;background:#fff"></div>
<div class="t" style="left:509px;top:481px;transform:scaleX(0.875);color:#000">SkinStructureHeavy</div>
<div class="a" style="left:793px;top:478px;width:16px;height:17px;border-top:1px solid #eef1f5;border-left:1px solid #eef1f5;border-bottom:2px solid #3e434c;border-right:2px solid #3e434c;background:#8e98aa;"></div>
<svg class="a" style="left:797px;top:484px" width="7" height="4" viewBox="0 0 7 4" shape-rendering="crispEdges"><path d="M0 0h7v1H6v1H5v1H4v1H3V3H2V2H1V1H0z" fill="#000"/></svg>
<div class="t" style="left:442px;top:512px;transform:scaleX(0.875);color:#0c1018">DamagePoints</div>
<div class="a" style="left:518px;top:507px;width:286px;height:21px;border-top:2px solid #40454e;border-left:2px solid #40454e;border-bottom:1px solid #e6e9f0;border-right:1px solid #e6e9f0;background:#fff"></div>
<div class="t" style="left:520px;top:510px;transform:scaleX(0.875);color:#000">0.000</div>
<div class="a" style="left:786px;top:509px;width:16px;height:8px;border-top:1px solid #eef1f5;border-left:1px solid #eef1f5;border-bottom:2px solid #3e434c;border-right:2px solid #3e434c;background:#8e98aa;border-bottom-width:1px;border-right-width:1px"></div>
<div class="a" style="left:786px;top:517px;width:16px;height:9px;border-top:1px solid #eef1f5;border-left:1px solid #eef1f5;border-bottom:2px solid #3e434c;border-right:2px solid #3e434c;background:#8e98aa;border-bottom-width:1px;border-right-width:1px"></div>
<svg class="a" style="left:792px;top:511px" width="5" height="3" viewBox="0 0 5 3" shape-rendering="crispEdges"><path d="M2 0h1v1h1v1h1v1H0V2h1V1h1z" fill="#000"/></svg>
<svg class="a" style="left:792px;top:520px" width="5" height="3" viewBox="0 0 5 3" shape-rendering="crispEdges"><path d="M0 0h5v1H4v1H3v1H2V2H1V1H0z" fill="#000"/></svg>
<div class="t" style="left:442px;top:543px;transform:scaleX(0.875);color:#0c1018">DeathPoints</div>
<div class="a" style="left:507px;top:538px;width:297px;height:21px;border-top:2px solid #40454e;border-left:2px solid #40454e;border-bottom:1px solid #e6e9f0;border-right:1px solid #e6e9f0;background:#fff"></div>
<div class="t" style="left:509px;top:541px;transform:scaleX(0.875);color:#000">0.000</div>
<div class="a" style="left:786px;top:540px;width:16px;height:8px;border-top:1px solid #eef1f5;border-left:1px solid #eef1f5;border-bottom:2px solid #3e434c;border-right:2px solid #3e434c;background:#8e98aa;border-bottom-width:1px;border-right-width:1px"></div>
<div class="a" style="left:786px;top:548px;width:16px;height:9px;border-top:1px solid #eef1f5;border-left:1px solid #eef1f5;border-bottom:2px solid #3e434c;border-right:2px solid #3e434c;background:#8e98aa;border-bottom-width:1px;border-right-width:1px"></div>
<svg class="a" style="left:792px;top:542px" width="5" height="3" viewBox="0 0 5 3" shape-rendering="crispEdges"><path d="M2 0h1v1h1v1h1v1H0V2h1V1h1z" fill="#000"/></svg>
<svg class="a" style="left:792px;top:551px" width="5" height="3" viewBox="0 0 5 3" shape-rendering="crispEdges"><path d="M0 0h5v1H4v1H3v1H2V2H1V1H0z" fill="#000"/></svg>
<div class="t" style="left:442px;top:570px;transform:scaleX(0.875);color:#0c1018">TranslatedNameID</div>
<div class="a" style="left:442px;top:585px;width:369px;height:25px;border-top:2px solid #40454e;border-left:2px solid #40454e;border-bottom:1px solid #e6e9f0;border-right:1px solid #e6e9f0;background:#8e98aa"></div>
<div class="t" style="left:446px;top:592px;transform:scaleX(0.875);color:#0c1018">IDS_Enc_Struct_Civ_Console_Name</div>
<div class="a" style="left:788px;top:587px;width:21px;height:21px;border-top:1px solid #eef1f5;border-left:1px solid #eef1f5;border-bottom:2px solid #3e434c;border-right:2px solid #3e434c;background:#8e98aa;"></div>
<svg class="a" style="left:792px;top:590px" width="12" height="15" viewBox="0 0 12 15" shape-rendering="crispEdges"><path d="M1.5 0.5h6l3 3v10h-9z" fill="#fff" stroke="#202060"/><path d="M3 5h6M3 7h6M3 9h6M3 11h6" stroke="#6070c0"/></svg>
<div class="t" style="left:442px;top:621px;transform:scaleX(0.875);color:#0c1018">InfoIconTextureFilename</div>
<div class="a" style="left:442px;top:636px;width:369px;height:21px;border-top:2px solid #40454e;border-left:2px solid #40454e;border-bottom:1px solid #e6e9f0;border-right:1px solid #e6e9f0;background:#fff"></div>
<div class="a" style="left:788px;top:636px;width:21px;height:21px;border-top:1px solid #eef1f5;border-left:1px solid #eef1f5;border-bottom:2px solid #3e434c;border-right:2px solid #3e434c;background:#8e98aa;"></div>
<svg class="a" style="left:791px;top:641px" width="14" height="11" viewBox="0 0 14 11" shape-rendering="crispEdges"><path d="M0.5 1.5l1-1h4l1 1h6v9H0.5z" fill="#f0ee80" stroke="#505030"/><rect x="1" y="3" width="12" height="7" fill="#e8e470"/></svg>
<div class="t" style="left:442px;top:672px;transform:scaleX(0.875);color:#0c1018">Encyclopedia Type</div>
<div class="a" style="left:540px;top:667px;width:271px;height:21px;border-top:2px solid #40454e;border-left:2px solid #40454e;border-bottom:1px solid #e6e9f0;border-right:1px solid #e6e9f0;background:#fff"></div>
<div class="a" style="left:793px;top:669px;width:16px;height:17px;border-top:1px solid #eef1f5;border-left:1px solid #eef1f5;border-bottom:2px solid #3e434c;border-right:2px solid #3e434c;background:#8e98aa;"></div>
<svg class="a" style="left:797px;top:675px" width="7" height="4" viewBox="0 0 7 4" shape-rendering="crispEdges"><path d="M0 0h7v1H6v1H5v1H4v1H3V3H2V2H1V1H0z" fill="#000"/></svg>
<div class="a" style="left:572px;top:709px;width:76px;height:23px;border-top:1px solid #eef1f5;border-left:1px solid #eef1f5;border-bottom:2px solid #3a3f48;border-right:2px solid #3a3f48;background:#8e98aa"></div>
<div class="t" style="left:572px;top:714px;width:76px;text-align:center"><span style="display:inline-block;transform:scaleX(0.875)">OK</span></div>
<div class="a" style="left:653px;top:709px;width:75px;height:23px;border-top:1px solid #eef1f5;border-left:1px solid #eef1f5;border-bottom:2px solid #3a3f48;border-right:2px solid #3a3f48;background:#8e98aa"></div>
<div class="t" style="left:653px;top:714px;width:75px;text-align:center"><span style="display:inline-block;transform:scaleX(0.875)">Cancel</span></div>
<div class="a" style="left:740px;top:709px;width:113px;height:23px;border-top:1px solid #eef1f5;border-left:1px solid #eef1f5;border-bottom:2px solid #3a3f48;border-right:2px solid #3a3f48;background:#8e98aa"></div>
<div class="t" style="left:740px;top:714px;width:113px;text-align:center"><span style="display:inline-block;transform:scaleX(0.875)">OK &amp; Propagate...</span></div></body></html>
